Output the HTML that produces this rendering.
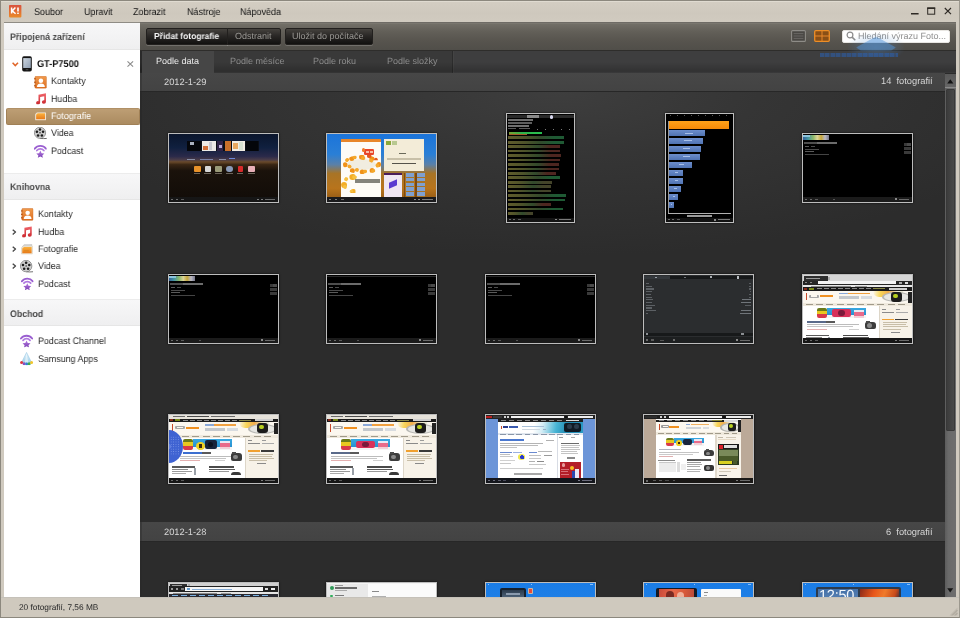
<!DOCTYPE html>
<html>
<head>
<meta charset="utf-8">
<title>Kies</title>
<style>
*{box-sizing:border-box;margin:0;padding:0}
html,body{width:960px;height:618px;overflow:hidden}
body{-webkit-font-smoothing:antialiased;text-rendering:geometricPrecision;font-family:"Liberation Sans",sans-serif;font-size:12px;background:#cfc9be;position:relative;color:#222}
.abs{position:absolute}
svg{position:absolute;overflow:visible}
#frame{left:0;top:0;width:960px;height:618px;background:#d0cabf;border:1px solid #8c887e;border-right-color:#9c988e}
#menubar{left:1px;top:1px;width:958px;height:21px;background:linear-gradient(#e6e2d8 0,#d3cdc2 1.5px,#cec8bd 60%,#d1cbc0 100%)}
.t{position:absolute;white-space:nowrap;line-height:1;transform-origin:0 50%;will-change:transform}
.menu{top:6.8px;font-size:9.8px;color:#141414;transform:scaleX(.918)}
#sidebar{left:4px;top:23px;width:136px;height:574px;background:#fff}
.shead{position:absolute;left:0;width:136px;background:linear-gradient(#f7f7f8,#efeff0);border-bottom:1px solid #e6e6e6}
.sh{font-weight:bold;color:#4a4a4a;font-size:9.5px;transform:scaleX(.926)}
.it{font-size:9.5px;color:#2a2a2a;transform:scaleX(.937)}
#sel{left:1.6px;top:85.2px;width:134px;height:16.4px;border-radius:2px;background:linear-gradient(#bd9e74,#ab8b60);border:1px solid #a08056;border-top-color:#b09066}
#main{left:140px;top:23px;width:816px;height:574px;background:#2a2a2a;overflow:hidden}
#toolbar{left:0;top:0;width:816px;height:27px;background:linear-gradient(#726f67,#625f58 30%,#57544e 65%,#504e49);border-top:1px solid #7a776f}
.btn{position:absolute;top:5px;height:17px;background:linear-gradient(#45423e,#2a2826 45%,#121110);border:1px solid #22201e;box-shadow:0 1px 0 rgba(255,255,255,.18)}
.bt{font-size:8.8px;color:#9a9894;top:9px}
#tabs{left:0;top:27px;width:816px;height:23px;background:linear-gradient(rgba(0,0,0,0) 50%,rgba(0,0,0,.2) 92%,rgba(0,0,0,.05)),linear-gradient(90deg,#2a2a2a 0 2px,#393939 2px 312px,#2c2c2c 312px 313px,#444 313px 314px,#3e3e3f 314px);border-top:1px solid #2e2d2b}
#tabact{left:2px;top:28px;width:72px;height:21.5px;background:#464646}
.tab{font-size:9px;color:#8c8c8c;top:34px}
.dhead{position:absolute;left:0;width:805px;height:19.5px;background:linear-gradient(90deg,#3a3a3a 0 2px,transparent 2px),linear-gradient(#474747,#434343);border-bottom:1px solid #272727}
.dt{font-size:9.3px;color:#d6d6d6}
.th{position:absolute;border:1px solid #bdbdbd;background:#000;box-shadow:0 0 2px rgba(0,0,0,.8);overflow:hidden}
.th i{position:absolute;display:block}
.L{width:111px;height:70px}
.P{width:69px;height:110px}
#status{left:1px;top:597px;width:958px;height:20px;background:#cfc9be;border-top:1px solid #c5c1b9}
#scroll{left:805px;top:50.5px;width:11px;height:523.5px;background:linear-gradient(90deg,#5c5c5c,#6a6a6a 30%,#6e6e6e)}
#sthumb{left:1px;top:15px;width:9px;height:342px;background:linear-gradient(90deg,#3c3c3c,#484848);border:1px solid #383838;border-radius:1px}
</style>
</head>
<body>

<svg width="0" height="0" style="position:absolute">
<defs>
<linearGradient id="gOr" x1="0" y1="0" x2="0" y2="1"><stop offset="0" stop-color="#f09a4c"/><stop offset="1" stop-color="#dd6f22"/></linearGradient>
<linearGradient id="gRed" x1="0" y1="0" x2="0" y2="1"><stop offset="0" stop-color="#f0646a"/><stop offset="1" stop-color="#c9262c"/></linearGradient>
<linearGradient id="gPh" x1="0" y1="0" x2="0" y2="1"><stop offset="0" stop-color="#fbb13c"/><stop offset="1" stop-color="#e8791a"/></linearGradient>
<linearGradient id="gPu" x1="0" y1="0" x2="0" y2="1"><stop offset="0" stop-color="#b57adf"/><stop offset="1" stop-color="#7a3fb4"/></linearGradient>
<linearGradient id="gLogo" x1="0" y1="0" x2="0" y2="1"><stop offset="0" stop-color="#d9523f"/><stop offset="1" stop-color="#ea8a28"/></linearGradient>
<linearGradient id="gScr" x1="0" y1="0" x2="1" y2="1"><stop offset="0" stop-color="#cdd6e0"/><stop offset="1" stop-color="#8f9fb3"/></linearGradient>
<linearGradient id="gCone" x1="0" y1="0" x2="0" y2="1"><stop offset="0" stop-color="#e6f4fb"/><stop offset="1" stop-color="#9fd0ea"/></linearGradient>
<symbol id="ic-con" viewBox="0 0 13 13">
 <rect x="0.9" y="0.2" width="11.9" height="12.6" rx="1.3" fill="url(#gOr)" stroke="#c9651f" stroke-width=".5"/>
 <rect x="0" y="2.2" width="1.8" height="1.3" fill="#b95a1c"/><rect x="0" y="5.8" width="1.8" height="1.3" fill="#b95a1c"/><rect x="0" y="9.4" width="1.8" height="1.3" fill="#b95a1c"/>
 <circle cx="7" cy="4.9" r="2.35" fill="#fff"/>
 <path d="M2.9 11.4C2.9 8.7 4.7 7.7 7 7.7S11.1 8.7 11.1 11.4Z" fill="#fff"/>
</symbol>
<symbol id="ic-mus" viewBox="0 0 12 12">
 <path d="M3.6 1.7L11.3.3V9.3a2.1 1.8 0 1 1-1.7-1.75V3.4L5.3 4.2V10.2a2.1 1.8 0 1 1-1.7-1.75Z" fill="url(#gRed)"/>
</symbol>
<symbol id="ic-pho" viewBox="0 0 12 9">
 <path d="M2.2 0.3H11.2a.6.6 0 0 1 .6.6V8.1a.6.6 0 0 1-.6.6H.8a.6.6 0 0 1-.6-.6V2.3Z" fill="#f7efe2" stroke="#d9c7a8" stroke-width=".4"/>
 <path d="M2.8 1.3H10.8V7.7H1.2V2.9Z" fill="url(#gPh)"/>
</symbol>
<symbol id="ic-pho2" viewBox="0 0 12 11">
 <path d="M3.4.4H11.4V8.4H1.6V2.4Z" fill="#d9d9d9" stroke="#bdbdbd" stroke-width=".4" transform="rotate(-4 6 5)"/>
 <path d="M2.4 2H11.4a.5.5 0 0 1 .5.5V10.1a.5.5 0 0 1-.5.5H.7a.5.5 0 0 1-.5-.5V4Z" fill="#efe6d6" stroke="#c9bca4" stroke-width=".4"/>
 <path d="M2.9 3.1H10.9V9.6H1.2V4.7Z" fill="url(#gPh)"/>
 <rect x="3" y="6.3" width="5" height="1.4" fill="#d9861f" opacity=".7"/>
</symbol>
<symbol id="ic-vid" viewBox="0 0 14 13">
 <path d="M6.5 12.2C9 12.6 11.5 12.4 13.6 12.2" stroke="#4a4a4a" stroke-width=".9" fill="none"/>
 <circle cx="6.4" cy="6.2" r="6" fill="#d8d8d8" stroke="#6a6a6a" stroke-width=".7"/>
 <circle cx="6.4" cy="6.2" r="4.9" fill="#bdbdbd" opacity=".55"/>
 <circle cx="6.4" cy="2.7" r="1.35" fill="#1c1c1c"/><circle cx="9.7" cy="5.1" r="1.35" fill="#1c1c1c"/><circle cx="8.45" cy="9" r="1.35" fill="#1c1c1c"/><circle cx="4.35" cy="9" r="1.35" fill="#1c1c1c"/><circle cx="3.1" cy="5.1" r="1.35" fill="#1c1c1c"/>
 <circle cx="6.4" cy="6.2" r=".8" fill="#333"/>
</symbol>
<symbol id="ic-pod" viewBox="0 0 13 14">
 <path d="M.7 4.6A7.4 7.4 0 0 1 12.3 4.6" stroke="#9a5fd0" stroke-width="1.9" fill="none" stroke-linecap="round"/>
 <path d="M2.9 6.5A4.8 4.8 0 0 1 10.1 6.5" stroke="#b07ae0" stroke-width="1.8" fill="none" stroke-linecap="round"/>
 <path d="M6.5 6.6L7.75 9.3L10.6 9.6L8.5 11.5L9.1 14L6.5 12.7L3.9 14L4.5 11.5L2.4 9.6L5.25 9.3Z" fill="url(#gPu)"/>
</symbol>
<symbol id="ic-app" viewBox="0 0 13 13">
 <path d="M6.5.3L11.6 10.6H1.4Z" fill="url(#gCone)" stroke="#8fc3e0" stroke-width=".5"/>
 <path d="M6.5 1.5L8.3 10H4.7Z" fill="#fff" opacity=".55"/>
 <circle cx="1.6" cy="10.3" r="1.5" fill="#e0383e"/><circle cx="4.1" cy="11.5" r="1.5" fill="#8b4fc0"/><circle cx="6.6" cy="11.9" r="1.5" fill="#2f7fd6"/><circle cx="9.1" cy="11.5" r="1.5" fill="#3fae4a"/><circle cx="11.5" cy="10.3" r="1.5" fill="#f1c62d"/>
</symbol>
<symbol id="ic-chev" viewBox="0 0 5 7"><path d="M.8.7L4 3.5L.8 6.3" stroke="#484848" stroke-width="1.5" fill="none"/></symbol>
</defs>
</svg>
<div id="frame" class="abs"></div>
<div id="menubar" class="abs">
  <svg style="left:7.8px;top:3.8px" width="12.4" height="12.4" viewBox="0 0 12.4 12.4"><rect width="12.4" height="12.4" rx=".8" fill="url(#gLogo)"/><path d="M2.6 2.6V8.6M6.4 2.6L3.2 5.9L6.6 8.8" stroke="#fff" stroke-width="1.5" fill="none"/><path d="M9 2.4V6.6" stroke="#fff" stroke-width="1.6"/><rect x="8.2" y="7.6" width="1.6" height="1.4" fill="#fff"/></svg>
  <svg style="left:909px;top:6px" width="44" height="10" viewBox="0 0 44 10"><rect x="1" y="6" width="7.6" height="1.5" fill="#2e2a25"/><rect x="17.7" y="1" width="7" height="6.2" fill="none" stroke="#2e2a25" stroke-width="1"/><rect x="17.2" y=".5" width="8" height="1.5" fill="#2e2a25"/><path d="M34.8 1L41 7.2M41 1L34.8 7.2" stroke="#2e2a25" stroke-width="1.15"/></svg>
  <span class="t menu" id="m1" style="left:33px">Soubor</span>
  <span class="t menu" id="m2" style="left:83px">Upravit</span>
  <span class="t menu" id="m3" style="left:132px">Zobrazit</span>
  <span class="t menu" id="m4" style="left:186px">Nástroje</span>
  <span class="t menu" id="m5" style="left:239px">Nápověda</span>
</div>
<div class="abs" style="left:4px;top:22px;width:952px;height:1px;background:linear-gradient(90deg,#8f8c85 0 136px,#6f6c66 136px)"></div>
<div id="sidebar" class="abs">
  <div class="shead" style="top:0;height:27px"></div>
  <span class="t sh" id="s1" style="left:6px;top:9.5px">Připojená zařízení</span>
  <span class="t it" id="d0" style="left:33px;top:37px;font-weight:bold;color:#111;font-size:9.8px">GT-P7500</span>
  <span class="t it" id="d1" style="left:47px;top:54px">Kontakty</span>
  <span class="t it" id="d2" style="left:47px;top:71.5px">Hudba</span>
  <div id="sel" class="abs"></div>
  <span class="t it" id="d3" style="left:47px;top:89px;color:#fff">Fotografie</span>
  <span class="t it" id="d4" style="left:47px;top:106px">Videa</span>
  <span class="t it" id="d5" style="left:47px;top:123.5px">Podcast</span>
  <div class="shead" style="top:150px;height:27px;border-top:1px solid #ececec"></div>
  <span class="t sh" id="s2" style="left:6px;top:160px">Knihovna</span>
  <span class="t it" id="k1" style="left:34px;top:187px">Kontakty</span>
  <span class="t it" id="k2" style="left:34px;top:204.5px">Hudba</span>
  <span class="t it" id="k3" style="left:34px;top:221.5px">Fotografie</span>
  <span class="t it" id="k4" style="left:34px;top:239px">Videa</span>
  <span class="t it" id="k5" style="left:34px;top:256.5px">Podcast</span>
  <div class="shead" style="top:276px;height:27px;border-top:1px solid #ececec"></div>
  <span class="t sh" id="s3" style="left:6px;top:287px">Obchod</span>
  <span class="t it" id="o1" style="left:34px;top:314px">Podcast Channel</span>
  <span class="t it" id="o2" style="left:34px;top:331.5px">Samsung Apps</span>

  <svg style="left:7.5px;top:39px" width="6.6" height="4.6" viewBox="0 0 6.6 4.6"><path d="M.6.7L3.3 3.6L6 .7" stroke="#e0662a" stroke-width="1.5" fill="none"/></svg>
  <svg style="left:18.3px;top:33.4px" width="10" height="15.6" viewBox="0 0 10 15.6"><rect x=".2" y=".2" width="9.6" height="15.2" rx="1.7" fill="#141414"/><rect x="1.2" y="2.1" width="7.6" height="9.9" fill="url(#gScr)"/><rect x="3.6" y="13" width="2.8" height="1.3" rx=".6" fill="#444"/></svg>
  <svg style="left:123px;top:37.8px" width="6.6" height="6" viewBox="0 0 6.6 6"><path d="M.5.4L6.1 5.6M6.1.4L.5 5.6" stroke="#8a8a8a" stroke-width="1.1"/></svg>
  <svg style="left:29.9px;top:52.8px" width="12.8" height="12.6"><use href="#ic-con" width="12.8" height="12.6"/></svg>
  <svg style="left:30.6px;top:69.8px" width="11.6" height="11.6"><use href="#ic-mus" width="11.6" height="11.6"/></svg>
  <svg style="left:31px;top:89.3px" width="11.2" height="8.6"><use href="#ic-pho" width="11.2" height="8.6"/></svg>
  <svg style="left:29.6px;top:104.3px" width="13.1" height="12.2"><use href="#ic-vid" width="13.1" height="12.2"/></svg>
  <svg style="left:30px;top:120.8px" width="12.7" height="14"><use href="#ic-pod" width="12.7" height="14"/></svg>

  <svg style="left:17px;top:185.3px" width="12.4" height="12.8"><use href="#ic-con" width="12.4" height="12.8"/></svg>
  <svg style="left:17.3px;top:202.7px" width="11.4" height="11.7"><use href="#ic-mus" width="11.4" height="11.7"/></svg>
  <svg style="left:17.3px;top:221px" width="11.8" height="10.6"><use href="#ic-pho2" width="11.8" height="10.6"/></svg>
  <svg style="left:16px;top:237.3px" width="13.4" height="12.7"><use href="#ic-vid" width="13.4" height="12.7"/></svg>
  <svg style="left:16.5px;top:254.1px" width="12.6" height="13.3"><use href="#ic-pod" width="12.6" height="13.3"/></svg>
  <svg style="left:7.8px;top:205.5px" width="4.4" height="6.2"><use href="#ic-chev" width="4.4" height="6.2"/></svg>
  <svg style="left:7.8px;top:222.5px" width="4.4" height="6.2"><use href="#ic-chev" width="4.4" height="6.2"/></svg>
  <svg style="left:7.8px;top:240px" width="4.4" height="6.2"><use href="#ic-chev" width="4.4" height="6.2"/></svg>

  <svg style="left:16.3px;top:311.4px" width="13.1" height="13.6"><use href="#ic-pod" width="13.1" height="13.6"/></svg>
  <svg style="left:16.3px;top:329.3px" width="13.1" height="13.3"><use href="#ic-app" width="13.1" height="13.3"/></svg>
</div>
<div id="main" class="abs">
  <div id="toolbar" class="abs"></div>
  <div class="btn" style="left:6px;width:82px;border-radius:2px 0 0 2px"></div>
  <div class="btn" style="left:87px;width:54px;border-radius:0 2px 2px 0"></div>
  <div class="btn" style="left:145px;width:88px;border-radius:2px"></div>
  <span class="t bt" id="b1" style="left:13.6px;color:#f4f4f4;font-weight:bold;font-size:8.7px;transform:scaleX(.972)">Přidat fotografie</span>
  <span class="t bt" id="b2" style="left:94.8px;font-size:9px">Odstranit</span>
  <span class="t bt" id="b3" style="left:152px;font-size:9px">Uložit do počítače</span>

  <svg style="left:650.5px;top:7px" width="15" height="12" viewBox="0 0 15 12"><rect x=".6" y=".6" width="13.8" height="10.8" rx="1" fill="#4a4844" stroke="#8e8c87" stroke-width="1.1"/><path d="M2.6 3.6H12.4M2.6 6H12.4M2.6 8.4H12.4" stroke="#6c6a66" stroke-width=".9"/></svg>
  <svg style="left:673.5px;top:7px" width="16" height="12" viewBox="0 0 16 12"><rect x=".7" y=".7" width="14.6" height="10.6" rx="1" fill="#8a4f16" stroke="#ee8e26" stroke-width="1.3"/><path d="M8 .7V11.3M.7 6H15.3" stroke="#e8882a" stroke-width="1"/></svg>
  <div class="abs" style="left:702px;top:6.6px;width:108px;height:13.8px;background:#fff;border-radius:2px;border:1px solid #e8e6e2"></div>
  <svg style="left:706px;top:8.3px" width="10" height="10" viewBox="0 0 10 10"><circle cx="4" cy="4" r="2.9" fill="none" stroke="#8c8c8c" stroke-width="1.2"/><path d="M6.1 6.1L9.3 9.3" stroke="#8c8c8c" stroke-width="1.5"/></svg>
  <span class="t" id="sr" style="left:718px;top:9px;font-size:9px;color:#8f8f8f">Hledání výrazu Foto...</span>
  <div id="tabs" class="abs"></div>
  <div id="tabact" class="abs"></div>
  <span class="t tab" id="t1" style="left:16px;color:#ececec">Podle data</span>
  <span class="t tab" id="t2" style="left:90px">Podle měsíce</span>
  <span class="t tab" id="t3" style="left:173px">Podle roku</span>
  <span class="t tab" id="t4" style="left:247px">Podle složky</span>
  <div id="content" class="abs" style="left:2px;top:68px;width:803px;height:507px;background:radial-gradient(ellipse 500px 165px at 52% 0,#3e3e3e 0,#353535 40%,#2c2c2c 100%) #2c2c2c"></div>
  <div class="dhead" style="top:49.5px;height:19px"></div>
  <span class="t dt" id="h1" style="left:24px;top:55.3px">2012-1-29</span>
  <span class="t dt" id="h2" style="left:741px;top:54.3px">14&nbsp; fotografií</span>
  <div class="dhead" style="top:499px"></div>
  <span class="t dt" id="h3" style="left:24px;top:504.6px">2012-1-28</span>
  <span class="t dt" id="h4" style="left:746px;top:504.6px">6&nbsp; fotografií</span>

  <!-- row 1 -->
  <div class="th L" id="a1" style="left:28px;top:110px"><i style="left:0px;top:0px;width:109px;height:68px;background:linear-gradient(#0a152c 0%,#10203f 20%,#2b2a4a 33%,#4a3c48 38%,#6a4a2a 41%,#3a2614 45%,#1a120b 54%,#110c08 100%)"></i><i style="left:18px;top:6.5px;width:72px;height:10.5px;background:#0a0e16"></i><i style="left:18px;top:6.5px;width:13.5px;height:10.5px;background:#05070b"></i><i style="left:21px;top:8px;width:4px;height:3px;background:#aab2c0"></i><i style="left:33px;top:7px;width:14px;height:10px;background:#eceae6"></i><i style="left:34px;top:12px;width:5px;height:4px;background:#d0703a"></i><i style="left:40px;top:8px;width:3px;height:8px;background:#c9c9d0"></i><i style="left:48px;top:7px;width:6px;height:10px;background:#2e2348"></i><i style="left:50px;top:11px;width:3px;height:3px;background:#b8a8d8"></i><i style="left:56px;top:7px;width:6px;height:10px;background:#c8702a"></i><i style="left:62.5px;top:7px;width:13.5px;height:10px;background:#f1ece2"></i><i style="left:64px;top:9px;width:5px;height:6px;background:#e8a860"></i><i style="left:70px;top:8px;width:4px;height:8px;background:#d6e0d0"></i><i style="left:76.5px;top:7px;width:12.5px;height:10px;background:#04060a"></i><i style="left:18px;top:24.5px;width:8px;height:0.9px;background:#8a8fa6"></i><i style="left:31px;top:24.5px;width:13px;height:0.9px;background:#7a82a8"></i><i style="left:50px;top:24.5px;width:7px;height:0.9px;background:#8a8fa6"></i><i style="left:60px;top:24.2px;width:6px;height:1.2px;background:#6a86d8"></i><i style="left:25px;top:32px;width:6.5px;height:6px;background:#e8922a;border-radius:1px"></i><i style="left:35.5px;top:32px;width:6.2px;height:6px;background:#d8d8d8;border-radius:1px"></i><i style="left:46.2px;top:32px;width:6.4px;height:6px;background:#9a9a78;border-radius:1px"></i><i style="left:57.3px;top:32px;width:6.4px;height:6px;background:#8a9ab8;border-radius:3px"></i><i style="left:68.5px;top:32px;width:5.5px;height:6px;background:#d82a2a;border-radius:1px"></i><i style="left:79.2px;top:32px;width:6.8px;height:6px;background:#e8b0b8;border-radius:1px"></i><i style="left:25px;top:39px;width:6px;height:1px;background:#6a6258"></i><i style="left:35px;top:39px;width:7px;height:0.8px;background:#6a6258"></i><i style="left:46px;top:39px;width:7px;height:0.8px;background:#6a6258"></i><i style="left:57px;top:39px;width:7px;height:0.8px;background:#6a6258"></i><i style="left:68px;top:39px;width:6px;height:0.8px;background:#6a6258"></i><i style="left:79px;top:39px;width:7px;height:0.8px;background:#6a6258"></i><i style="left:0px;top:63px;width:109px;height:5px;background:#161616"></i><i style="left:2px;top:64.8px;width:2px;height:1.4px;background:#6a6a6a"></i><i style="left:7px;top:64.8px;width:2px;height:1.4px;background:#6a6a6a"></i><i style="left:12px;top:64.8px;width:3px;height:1.4px;background:#5a5a5a"></i><i style="left:88px;top:64.8px;width:2px;height:1.4px;background:#7a7a7a"></i><i style="left:92px;top:64.8px;width:2px;height:1.4px;background:#7a7a7a"></i><i style="left:96px;top:65px;width:10px;height:1px;background:#6a6a6a"></i></div>
  <div class="th L" id="a2" style="left:186px;top:110px"><i style="left:0px;top:0px;width:109px;height:68px;background:linear-gradient(#1b74da 0%,#2a7fd6 30%,#5a80a8 45%,#a87426 58%,#b8741c 80%,#8a5414 100%)"></i><i style="left:13.6px;top:5.4px;width:40px;height:57.5px;background:#fdfbf6"></i><i style="left:13.6px;top:5.4px;width:40px;height:2.4px;background:#e8862a"></i><i style="left:20px;top:25px;width:29px;height:11px;background:#f1ede0;border-radius:50%"></i><i style="left:15.6px;top:20.6px;width:38px;height:19px;background:transparent;border:5.4px dotted #f0921a;border-radius:50%"></i><i style="left:16.6px;top:21.6px;width:36px;height:17px;background:transparent;border:4px dotted #f4a82c;border-radius:50%;transform:rotate(11deg)"></i><i style="left:34px;top:20.4px;width:17px;height:12px;background:transparent;border:4.6px dotted #e35a1e;border-radius:50%;clip-path:inset(0 0 52% 30%)"></i><i style="left:13.6px;top:39.6px;width:24px;height:21px;background:transparent;border:6px dotted #f3ad26;border-radius:50%;clip-path:inset(0 38% 8% 0)"></i><i style="left:14.6px;top:41px;width:22px;height:19px;background:transparent;border:4px dotted #f6c040;border-radius:50%;clip-path:inset(0 40% 10% 0);transform:rotate(14deg)"></i><i style="left:36.7px;top:15px;width:10.6px;height:6.4px;background:#e8452a;border-radius:1.2px"></i><i style="left:38.5px;top:16.6px;width:3px;height:2.6px;background:#f6c0a8"></i><i style="left:42.5px;top:16.6px;width:3px;height:2.6px;background:#f6c0a8"></i><i style="left:34.5px;top:14.2px;width:3.2px;height:3.6px;background:#f07a2a;border-radius:2px"></i><i style="left:28.3px;top:45px;width:25.2px;height:4px;background:#84847c"></i><i style="left:57.3px;top:5.4px;width:40px;height:32px;background:#f3ecd8"></i><i style="left:59px;top:7px;width:5px;height:4px;background:#8aa83a"></i><i style="left:65px;top:7px;width:5px;height:4px;background:#b8c890"></i><i style="left:72px;top:19px;width:7px;height:1.4px;background:#6a6a5a"></i><i style="left:60px;top:24px;width:34px;height:0.8px;background:#c8c0a8"></i><i style="left:60px;top:25.4px;width:34px;height:0.8px;background:#c8c0a8"></i><i style="left:65px;top:28.5px;width:24px;height:1.4px;background:#55524a"></i><i style="left:57.3px;top:38.8px;width:17.5px;height:24px;background:#efe6f2"></i><i style="left:57.3px;top:38.8px;width:17.5px;height:2.2px;background:#4a1c5a"></i><i style="left:62px;top:47px;width:8px;height:6px;background:#5a3ad0;transform:skewY(-25deg)"></i><i style="left:76.5px;top:39px;width:1.6px;height:24px;background:#7a4a14"></i><i style="left:79px;top:39px;width:8px;height:24px;background:repeating-linear-gradient(#7fa0d0 0 3.6px,#a87426 3.6px 4.8px)"></i><i style="left:88px;top:39px;width:1.6px;height:24px;background:#7a4a14"></i><i style="left:90px;top:39px;width:8px;height:24px;background:repeating-linear-gradient(#7fa0d0 0 3.6px,#a87426 3.6px 4.8px)"></i><i style="left:0px;top:63.2px;width:109px;height:5px;background:#1a1a1c"></i><i style="left:2px;top:65px;width:2px;height:1.4px;background:#7a7a7a"></i><i style="left:8px;top:65px;width:2px;height:1.4px;background:#7a7a7a"></i><i style="left:14px;top:65px;width:3px;height:1.4px;background:#6a6a6a"></i><i style="left:87px;top:65px;width:2px;height:1.4px;background:#8a8a8a"></i><i style="left:91px;top:65px;width:2px;height:1.4px;background:#8a8a8a"></i><i style="left:95px;top:65.2px;width:11px;height:1px;background:#7a7a7a"></i></div>
  <div class="th P" id="a3" style="left:366px;top:90px"><i style="left:0px;top:0px;width:67px;height:108px;background:#000"></i><i style="left:0px;top:1.2px;width:67px;height:2.6px;background:#2a2a2a"></i><i style="left:20px;top:1.2px;width:12px;height:2.6px;background:#8a8a8a"></i><i style="left:43px;top:1.4px;width:3.4px;height:3.4px;background:#d8d8f0;border-radius:2px"></i><i style="left:1px;top:5px;width:25px;height:2.2px;background:#6e6e6e"></i><i style="left:1px;top:8px;width:24px;height:2.2px;background:#5e5e5e"></i><i style="left:1px;top:11px;width:21px;height:2px;background:#707070"></i><i style="left:1px;top:14px;width:8px;height:1.2px;background:#5a5a5a"></i><i style="left:12px;top:14px;width:11px;height:1.2px;background:#5a5a5a"></i><i style="left:30px;top:14.5px;width:1.2px;height:1px;background:#7a7a7a"></i><i style="left:38px;top:14.5px;width:1.2px;height:1px;background:#7a7a7a"></i><i style="left:46px;top:14.5px;width:1.2px;height:1px;background:#7a7a7a"></i><i style="left:54px;top:14.5px;width:1.2px;height:1px;background:#7a7a7a"></i><i style="left:62px;top:14.5px;width:1.2px;height:1px;background:#7a7a7a"></i><i style="left:1.5px;top:17.6px;width:33px;height:2px;background:linear-gradient(90deg,#7aa030,#2fb44a 40%,#28c050)"></i><i style="left:1.5px;top:20px;width:18px;height:1px;background:#a05a2a"></i><i style="left:0.8px;top:22.4px;width:56.2px;height:2.7px;background:linear-gradient(90deg,#605c2c 0%,#4f532a 30%,#324a2c 58%,#1f5a34 82%,#1f5a34 100%)"></i><i style="left:0.8px;top:26.85px;width:56.2px;height:2.7px;background:linear-gradient(90deg,#605c2c 0%,#4f532a 30%,#324a2c 58%,#1f5a34 82%,#1f5a34 100%)"></i><i style="left:0.8px;top:31.3px;width:52.2px;height:2.7px;background:linear-gradient(90deg,#605c2c 0%,#4f532a 30%,#324a2c 58%,#4e2620 82%,#4e2620 100%)"></i><i style="left:0.8px;top:35.75px;width:52.2px;height:2.7px;background:linear-gradient(90deg,#605c2c 0%,#4f532a 30%,#324a2c 58%,#4e2620 82%,#4e2620 100%)"></i><i style="left:0.8px;top:40.2px;width:53.2px;height:2.7px;background:linear-gradient(90deg,#605c2c 0%,#4f532a 30%,#324a2c 58%,#4e2620 82%,#4e2620 100%)"></i><i style="left:0.8px;top:44.65px;width:52.2px;height:2.7px;background:linear-gradient(90deg,#605c2c 0%,#4f532a 30%,#324a2c 58%,#4e2620 82%,#4e2620 100%)"></i><i style="left:0.8px;top:49.1px;width:51.2px;height:2.7px;background:linear-gradient(90deg,#605c2c 0%,#4f532a 30%,#324a2c 58%,#4e2620 82%,#4e2620 100%)"></i><i style="left:0.8px;top:53.55px;width:51.2px;height:2.7px;background:linear-gradient(90deg,#605c2c 0%,#4f532a 30%,#324a2c 58%,#4e2620 82%,#4e2620 100%)"></i><i style="left:0.8px;top:58px;width:48.2px;height:2.7px;background:linear-gradient(90deg,#605c2c 0%,#4f532a 30%,#324a2c 58%,#4e2620 82%,#4e2620 100%)"></i><i style="left:0.8px;top:62.45px;width:52.2px;height:2.7px;background:linear-gradient(90deg,#605c2c 0%,#4f532a 30%,#324a2c 58%,#1f5a34 82%,#1f5a34 100%)"></i><i style="left:0.8px;top:66.9px;width:44.2px;height:2.7px;background:linear-gradient(90deg,#605c2c 0%,#4f532a 30%,#324a2c 58%,#44442a 82%,#44442a 100%)"></i><i style="left:0.8px;top:71.35px;width:43.2px;height:2.7px;background:linear-gradient(90deg,#605c2c 0%,#4f532a 30%,#324a2c 58%,#44442a 82%,#44442a 100%)"></i><i style="left:0.8px;top:75.8px;width:43.2px;height:2.7px;background:linear-gradient(90deg,#605c2c 0%,#4f532a 30%,#324a2c 58%,#44442a 82%,#44442a 100%)"></i><i style="left:0.8px;top:80.25px;width:58.2px;height:2.7px;background:linear-gradient(90deg,#605c2c 0%,#4f532a 30%,#324a2c 58%,#1f5a34 82%,#1f5a34 100%)"></i><i style="left:0.8px;top:84.7px;width:57.2px;height:2.7px;background:linear-gradient(90deg,#605c2c 0%,#4f532a 30%,#324a2c 58%,#1f5a34 82%,#1f5a34 100%)"></i><i style="left:0.8px;top:89.15px;width:43.2px;height:2.7px;background:linear-gradient(90deg,#605c2c 0%,#4f532a 30%,#324a2c 58%,#4e2620 82%,#4e2620 100%)"></i><i style="left:0.8px;top:93.6px;width:55.2px;height:2.7px;background:linear-gradient(90deg,#605c2c 0%,#4f532a 30%,#324a2c 58%,#1f5a34 82%,#1f5a34 100%)"></i><i style="left:0.8px;top:98.05px;width:25.2px;height:2.7px;background:linear-gradient(90deg,#605c2c 0%,#4f532a 30%,#324a2c 58%,#44442a 82%,#44442a 100%)"></i><i style="left:0px;top:103.6px;width:67px;height:4.4px;background:#141414"></i><i style="left:2px;top:105px;width:2px;height:1.2px;background:#6a6a6a"></i><i style="left:6px;top:105px;width:2px;height:1.2px;background:#6a6a6a"></i><i style="left:11px;top:105px;width:3px;height:1.2px;background:#5a5a5a"></i><i style="left:48px;top:105px;width:2px;height:1.4px;background:#8a8a8a"></i><i style="left:52px;top:105px;width:12px;height:1.2px;background:#7a7a7a"></i></div>
  <div class="th P" id="a4" style="left:525px;top:90px"><i style="left:0px;top:0px;width:67px;height:108px;background:#000"></i><i style="left:2.4px;top:7.3px;width:61px;height:7.6px;background:linear-gradient(#ffa21a,#f58a08)"></i><i style="left:1.6px;top:16px;width:37.9px;height:6.2px;background:linear-gradient(#6c8ecc,#5073b2)"></i><i style="left:19.095px;top:18.5px;width:8.162px;height:1px;background:#a8c0e8"></i><i style="left:1.6px;top:23.95px;width:35.9px;height:6.2px;background:linear-gradient(#6c8ecc,#5073b2)"></i><i style="left:18.195px;top:26.45px;width:7.722px;height:1px;background:#a8c0e8"></i><i style="left:1.6px;top:31.9px;width:33.6px;height:6.2px;background:linear-gradient(#6c8ecc,#5073b2)"></i><i style="left:17.16px;top:34.4px;width:7.216px;height:1px;background:#a8c0e8"></i><i style="left:1.6px;top:39.85px;width:32.6px;height:6.2px;background:linear-gradient(#6c8ecc,#5073b2)"></i><i style="left:16.71px;top:42.35px;width:6.996px;height:1px;background:#a8c0e8"></i><i style="left:1.6px;top:47.8px;width:24.4px;height:6.2px;background:linear-gradient(#6c8ecc,#5073b2)"></i><i style="left:13.02px;top:50.3px;width:5.192px;height:1px;background:#a8c0e8"></i><i style="left:1.6px;top:55.75px;width:15.6px;height:6.2px;background:linear-gradient(#6c8ecc,#5073b2)"></i><i style="left:9.06px;top:58.25px;width:3.256px;height:1px;background:#a8c0e8"></i><i style="left:1.6px;top:63.7px;width:15.2px;height:6.2px;background:linear-gradient(#6c8ecc,#5073b2)"></i><i style="left:8.88px;top:66.2px;width:3.168px;height:1px;background:#a8c0e8"></i><i style="left:1.6px;top:71.65px;width:13.4px;height:6.2px;background:linear-gradient(#6c8ecc,#5073b2)"></i><i style="left:8.07px;top:74.15px;width:2.772px;height:1px;background:#a8c0e8"></i><i style="left:1.6px;top:79.6px;width:10.8px;height:6.2px;background:linear-gradient(#6c8ecc,#5073b2)"></i><i style="left:6.9px;top:82.1px;width:2.2px;height:1px;background:#a8c0e8"></i><i style="left:1.6px;top:87.55px;width:6.4px;height:6.2px;background:linear-gradient(#6c8ecc,#5073b2)"></i><i style="left:4.92px;top:90.05px;width:1.232px;height:1px;background:#a8c0e8"></i><i style="left:2px;top:7px;width:0.8px;height:92px;background:#9a9a9a"></i><i style="left:2px;top:98.6px;width:63px;height:0.8px;background:#b0b0b0"></i><i style="left:21px;top:101px;width:25px;height:1.6px;background:#9a9a9a"></i><i style="left:4px;top:0.8px;width:1.2px;height:0.8px;background:#5a5a5a"></i><i style="left:11px;top:0.8px;width:1.2px;height:0.8px;background:#5a5a5a"></i><i style="left:18px;top:0.8px;width:1.2px;height:0.8px;background:#5a5a5a"></i><i style="left:25px;top:0.8px;width:1.2px;height:0.8px;background:#5a5a5a"></i><i style="left:32px;top:0.8px;width:1.2px;height:0.8px;background:#5a5a5a"></i><i style="left:39px;top:0.8px;width:1.2px;height:0.8px;background:#5a5a5a"></i><i style="left:46px;top:0.8px;width:1.2px;height:0.8px;background:#5a5a5a"></i><i style="left:53px;top:0.8px;width:1.2px;height:0.8px;background:#5a5a5a"></i><i style="left:60px;top:0.8px;width:1.2px;height:0.8px;background:#5a5a5a"></i><i style="left:0px;top:103.8px;width:67px;height:4.2px;background:#121212"></i><i style="left:2px;top:105.2px;width:2px;height:1.2px;background:#6a6a6a"></i><i style="left:6px;top:105.2px;width:2px;height:1.2px;background:#6a6a6a"></i><i style="left:11px;top:105.2px;width:3px;height:1.2px;background:#5a5a5a"></i><i style="left:48px;top:105.2px;width:2px;height:1.4px;background:#8a8a8a"></i><i style="left:52px;top:105.2px;width:12px;height:1.2px;background:#7a7a7a"></i></div>
  <div class="th L" id="a5" style="left:662px;top:110px"><i style="left:0px;top:0px;width:109px;height:68px;background:#000"></i><i style="left:0px;top:1.4px;width:26px;height:4.2px;background:linear-gradient(90deg,#34609c 0%,#4596a0 20%,#8fb86a 40%,#dcd498 55%,#c4a63c 70%,#b8b8c4 85%,#77778a 100%)"></i><i style="left:0px;top:1.4px;width:7px;height:1.8px;background:#8cc4dc"></i><i style="left:1px;top:7.6px;width:33px;height:2.8px;background:#6c6c6c"></i><i style="left:1px;top:7.6px;width:13px;height:2.8px;background:#4e4e4e"></i><i style="left:2px;top:12px;width:4px;height:1px;background:#5a5a5a"></i><i style="left:8px;top:12px;width:4px;height:1px;background:#4a4a4a"></i><i style="left:2px;top:14.6px;width:14px;height:1px;background:#4a4a4a"></i><i style="left:2px;top:17.2px;width:9px;height:1.2px;background:#5a5a5a"></i><i style="left:2px;top:19.8px;width:24px;height:1.2px;background:#444"></i><i style="left:101px;top:8.6px;width:7px;height:3.2px;background:#3a3a3a"></i><i style="left:101px;top:12.8px;width:7px;height:3.2px;background:#3a3a3a"></i><i style="left:101px;top:17px;width:7px;height:3.2px;background:#3a3a3a"></i><i style="left:104px;top:8.6px;width:4px;height:3.2px;background:#4a4a4a"></i><i style="left:0px;top:62.6px;width:109px;height:5.4px;background:#1b1b1b"></i><i style="left:2px;top:64.6px;width:2px;height:1.4px;background:#6a6a6a"></i><i style="left:7px;top:64.6px;width:2px;height:1.4px;background:#6a6a6a"></i><i style="left:12px;top:64.6px;width:3px;height:1.4px;background:#5a5a5a"></i><i style="left:30px;top:64.8px;width:2px;height:1px;background:#555"></i><i style="left:92px;top:64.4px;width:2px;height:1.6px;background:#8a8a8a"></i><i style="left:96px;top:64.8px;width:10px;height:1px;background:#6a6a6a"></i></div>
  <!-- row 2 -->
  <div class="th L" id="b1_" style="left:28px;top:251px"><i style="left:0px;top:0px;width:109px;height:68px;background:#000"></i><i style="left:0px;top:1.4px;width:26px;height:4.2px;background:linear-gradient(90deg,#34609c 0%,#4596a0 20%,#8fb86a 40%,#dcd498 55%,#c4a63c 70%,#b8b8c4 85%,#77778a 100%)"></i><i style="left:0px;top:1.4px;width:7px;height:1.8px;background:#8cc4dc"></i><i style="left:1px;top:7.6px;width:33px;height:2.8px;background:#6c6c6c"></i><i style="left:1px;top:7.6px;width:13px;height:2.8px;background:#4e4e4e"></i><i style="left:2px;top:12px;width:4px;height:1px;background:#5a5a5a"></i><i style="left:8px;top:12px;width:4px;height:1px;background:#4a4a4a"></i><i style="left:2px;top:14.6px;width:14px;height:1px;background:#4a4a4a"></i><i style="left:2px;top:17.2px;width:9px;height:1.2px;background:#5a5a5a"></i><i style="left:2px;top:19.8px;width:24px;height:1.2px;background:#444"></i><i style="left:101px;top:8.6px;width:7px;height:3.2px;background:#3a3a3a"></i><i style="left:101px;top:12.8px;width:7px;height:3.2px;background:#3a3a3a"></i><i style="left:101px;top:17px;width:7px;height:3.2px;background:#3a3a3a"></i><i style="left:104px;top:8.6px;width:4px;height:3.2px;background:#4a4a4a"></i><i style="left:0px;top:62.6px;width:109px;height:5.4px;background:#1b1b1b"></i><i style="left:2px;top:64.6px;width:2px;height:1.4px;background:#6a6a6a"></i><i style="left:7px;top:64.6px;width:2px;height:1.4px;background:#6a6a6a"></i><i style="left:12px;top:64.6px;width:3px;height:1.4px;background:#5a5a5a"></i><i style="left:30px;top:64.8px;width:2px;height:1px;background:#555"></i><i style="left:92px;top:64.4px;width:2px;height:1.6px;background:#8a8a8a"></i><i style="left:96px;top:64.8px;width:10px;height:1px;background:#6a6a6a"></i></div>
  <div class="th L" id="b2_" style="left:186px;top:251px"><i style="left:0px;top:0px;width:109px;height:68px;background:#000"></i><i style="left:0px;top:1.2px;width:109px;height:1px;background:#2a2a2a"></i><i style="left:1px;top:7.6px;width:33px;height:2.8px;background:#6c6c6c"></i><i style="left:1px;top:7.6px;width:13px;height:2.8px;background:#4e4e4e"></i><i style="left:2px;top:12px;width:4px;height:1px;background:#5a5a5a"></i><i style="left:8px;top:12px;width:4px;height:1px;background:#4a4a4a"></i><i style="left:2px;top:14.6px;width:14px;height:1px;background:#4a4a4a"></i><i style="left:2px;top:17.2px;width:9px;height:1.2px;background:#5a5a5a"></i><i style="left:2px;top:19.8px;width:24px;height:1.2px;background:#444"></i><i style="left:101px;top:8.6px;width:7px;height:3.2px;background:#3a3a3a"></i><i style="left:101px;top:12.8px;width:7px;height:3.2px;background:#3a3a3a"></i><i style="left:101px;top:17px;width:7px;height:3.2px;background:#3a3a3a"></i><i style="left:104px;top:8.6px;width:4px;height:3.2px;background:#4a4a4a"></i><i style="left:0px;top:62.6px;width:109px;height:5.4px;background:#1b1b1b"></i><i style="left:2px;top:64.6px;width:2px;height:1.4px;background:#6a6a6a"></i><i style="left:7px;top:64.6px;width:2px;height:1.4px;background:#6a6a6a"></i><i style="left:12px;top:64.6px;width:3px;height:1.4px;background:#5a5a5a"></i><i style="left:30px;top:64.8px;width:2px;height:1px;background:#555"></i><i style="left:92px;top:64.4px;width:2px;height:1.6px;background:#8a8a8a"></i><i style="left:96px;top:64.8px;width:10px;height:1px;background:#6a6a6a"></i></div>
  <div class="th L" id="b3_" style="left:345px;top:251px"><i style="left:0px;top:0px;width:109px;height:68px;background:#000"></i><i style="left:0px;top:1.2px;width:109px;height:1px;background:#2a2a2a"></i><i style="left:1px;top:7.6px;width:33px;height:2.8px;background:#6c6c6c"></i><i style="left:1px;top:7.6px;width:13px;height:2.8px;background:#4e4e4e"></i><i style="left:2px;top:12px;width:4px;height:1px;background:#5a5a5a"></i><i style="left:8px;top:12px;width:4px;height:1px;background:#4a4a4a"></i><i style="left:2px;top:14.6px;width:14px;height:1px;background:#4a4a4a"></i><i style="left:2px;top:17.2px;width:9px;height:1.2px;background:#5a5a5a"></i><i style="left:2px;top:19.8px;width:24px;height:1.2px;background:#444"></i><i style="left:101px;top:8.6px;width:7px;height:3.2px;background:#3a3a3a"></i><i style="left:101px;top:12.8px;width:7px;height:3.2px;background:#3a3a3a"></i><i style="left:101px;top:17px;width:7px;height:3.2px;background:#3a3a3a"></i><i style="left:104px;top:8.6px;width:4px;height:3.2px;background:#4a4a4a"></i><i style="left:0px;top:62.6px;width:109px;height:5.4px;background:#1b1b1b"></i><i style="left:2px;top:64.6px;width:2px;height:1.4px;background:#6a6a6a"></i><i style="left:7px;top:64.6px;width:2px;height:1.4px;background:#6a6a6a"></i><i style="left:12px;top:64.6px;width:3px;height:1.4px;background:#5a5a5a"></i><i style="left:30px;top:64.8px;width:2px;height:1px;background:#555"></i><i style="left:92px;top:64.4px;width:2px;height:1.6px;background:#8a8a8a"></i><i style="left:96px;top:64.8px;width:10px;height:1px;background:#6a6a6a"></i></div>
  <div class="th L" id="b4_" style="left:503px;top:251px"><i style="left:0px;top:0px;width:109px;height:68px;background:#2b2d2f"></i><i style="left:0px;top:0.6px;width:109px;height:3.6px;background:#161819"></i><i style="left:0px;top:0.6px;width:26px;height:3.6px;background:#34383c"></i><i style="left:11px;top:1.6px;width:2px;height:1.6px;background:#9aa0a8"></i><i style="left:40px;top:1.6px;width:1.6px;height:1.6px;background:#6a6e72"></i><i style="left:66px;top:1.4px;width:2px;height:2px;background:#a8acb0"></i><i style="left:93px;top:1.4px;width:2.2px;height:2.2px;background:#b8bcc0"></i><i style="left:2px;top:8px;width:3px;height:1.1px;background:#5c6064"></i><i style="left:2px;top:10.72px;width:6px;height:1.1px;background:#5c6064"></i><i style="left:2px;top:13.44px;width:8px;height:1.1px;background:#5c6064"></i><i style="left:2px;top:16.16px;width:6px;height:1.1px;background:#5c6064"></i><i style="left:2px;top:18.88px;width:5px;height:1.1px;background:#5c6064"></i><i style="left:2px;top:21.6px;width:6px;height:1.1px;background:#5c6064"></i><i style="left:2px;top:24.32px;width:7px;height:1.1px;background:#5c6064"></i><i style="left:2px;top:27.04px;width:6px;height:1.1px;background:#5c6064"></i><i style="left:2px;top:29.76px;width:9px;height:1.1px;background:#5c6064"></i><i style="left:2px;top:32.48px;width:6px;height:1.1px;background:#5c6064"></i><i style="left:2px;top:35.2px;width:10px;height:1.1px;background:#5c6064"></i><i style="left:2px;top:37.92px;width:2px;height:1.1px;background:#5c6064"></i><i style="left:105px;top:8px;width:2px;height:1.1px;background:#585c60"></i><i style="left:105px;top:10.72px;width:2px;height:1.1px;background:#585c60"></i><i style="left:105px;top:13.44px;width:2px;height:1.1px;background:#585c60"></i><i style="left:105.5px;top:16.16px;width:1.5px;height:1.1px;background:#585c60"></i><i style="left:105px;top:18.88px;width:2px;height:1.1px;background:#585c60"></i><i style="left:105px;top:21.6px;width:2px;height:1.1px;background:#585c60"></i><i style="left:98px;top:24.32px;width:9px;height:1.1px;background:#70757a"></i><i style="left:97px;top:27.04px;width:10px;height:1.1px;background:#70757a"></i><i style="left:101px;top:29.76px;width:6px;height:1.1px;background:#585c60"></i><i style="left:97px;top:35.2px;width:10px;height:1.1px;background:#70757a"></i><i style="left:96px;top:37.92px;width:11px;height:1.1px;background:#70757a"></i><i style="left:0px;top:57.6px;width:109px;height:3px;background:#17191a"></i><i style="left:1.5px;top:58.2px;width:2px;height:1.6px;background:#8a8e92"></i><i style="left:97px;top:58.4px;width:3px;height:1.4px;background:#8a8e92"></i><i style="left:0px;top:61.6px;width:109px;height:6.4px;background:#1d1f20"></i><i style="left:2px;top:64.4px;width:2px;height:1.4px;background:#6a6a6a"></i><i style="left:7px;top:64.4px;width:3px;height:1.4px;background:#5a5a5a"></i><i style="left:16px;top:64.6px;width:4px;height:1px;background:#555"></i><i style="left:29px;top:64.4px;width:2px;height:1.4px;background:#6a6a6a"></i><i style="left:92px;top:64.2px;width:2px;height:1.6px;background:#8a8a8a"></i><i style="left:96px;top:64.6px;width:10px;height:1px;background:#6a6a6a"></i></div>
  <div class="th L" id="b5_" style="left:662px;top:251px"><i style="left:0px;top:0px;width:109px;height:68px;background:#fff"></i><i style="left:0px;top:0px;width:109px;height:5.6px;background:#d6d6d6"></i><i style="left:1px;top:1.2px;width:24px;height:4.4px;background:#2e2e2e"></i><i style="left:3px;top:2.6px;width:14px;height:1px;background:#9a9a9a"></i><i style="left:25px;top:2px;width:2px;height:2.6px;background:#b0b0b0"></i><i style="left:0px;top:5.6px;width:109px;height:4.2px;background:#262626"></i><i style="left:15px;top:6.3px;width:78px;height:2.6px;background:#f4f4f4"></i><i style="left:2px;top:6.8px;width:2px;height:1.6px;background:#8a8a8a"></i><i style="left:7px;top:6.8px;width:2px;height:1.6px;background:#8a8a8a"></i><i style="left:96px;top:6.6px;width:3px;height:2px;background:#aaa"></i><i style="left:102px;top:6.6px;width:3px;height:2px;background:#ddd"></i><i style="left:0px;top:9.8px;width:109px;height:2.4px;background:#e9e9e9"></i><i style="left:8px;top:10.6px;width:40px;height:0.8px;background:#8a8a8a"></i><i style="left:52px;top:10.6px;width:12px;height:0.8px;background:#9a9a9a"></i><i style="left:0px;top:12.2px;width:109px;height:3.6px;background:#1b1b1b"></i><i style="left:1px;top:13px;width:3px;height:1.8px;background:#8a2a1a"></i><i style="left:5.5px;top:13px;width:5px;height:1.8px;background:#7a8a1a"></i><i style="left:14px;top:13.4px;width:4.5px;height:1px;background:#8a8a8a"></i><i style="left:21px;top:13.4px;width:4.5px;height:1px;background:#8a8a8a"></i><i style="left:28px;top:13.4px;width:4.5px;height:1px;background:#8a8a8a"></i><i style="left:35px;top:13.4px;width:4.5px;height:1px;background:#8a8a8a"></i><i style="left:42px;top:13.4px;width:4.5px;height:1px;background:#8a8a8a"></i><i style="left:49px;top:13.4px;width:4.5px;height:1px;background:#8a8a8a"></i><i style="left:56px;top:13.4px;width:4.5px;height:1px;background:#8a8a8a"></i><i style="left:63px;top:13.4px;width:4.5px;height:1px;background:#8a8a8a"></i><i style="left:70px;top:13.4px;width:12px;height:1px;background:#8a8a4a"></i><i style="left:86px;top:12.8px;width:18px;height:2.2px;background:#cfcfcf"></i><i style="left:0px;top:15.8px;width:109px;height:12.6px;background:#fbf7ef"></i><i style="left:70px;top:15.8px;width:30px;height:6px;background:linear-gradient(100deg,transparent 0,#f6d040 25%,#f0a030 50%,#e8e8d0 80%);border-radius:0 0 14px 30px;opacity:.85"></i><i style="left:79px;top:17.2px;width:29px;height:10px;background:#b8b8b4;border-radius:50%"></i><i style="left:81px;top:18.2px;width:25px;height:8px;background:#e6e6e2;border-radius:50%"></i><i style="left:88px;top:17px;width:11px;height:10px;background:#1c1c1c;border-radius:3px"></i><i style="left:90px;top:18.8px;width:5px;height:4px;background:#b8d020;border-radius:2px"></i><i style="left:104.5px;top:16.8px;width:4.5px;height:11px;background:#222"></i><i style="left:2.5px;top:17.8px;width:0.9px;height:7.5px;background:#c84a2a"></i><i style="left:6px;top:19.6px;width:10px;height:3px;background:#a8a8a8;border-radius:1px"></i><i style="left:8px;top:20.4px;width:6px;height:1.4px;background:#fbf7ef"></i><i style="left:17px;top:20.2px;width:13px;height:2px;background:#f09020"></i><i style="left:36px;top:17.8px;width:9px;height:1.6px;background:#8aa8d8"></i><i style="left:45px;top:17.8px;width:22px;height:1.6px;background:#f0a040"></i><i style="left:36px;top:21.4px;width:20px;height:3px;background:#c4c8cc"></i><i style="left:58px;top:21.4px;width:11px;height:3px;background:#d8dce0"></i><i style="left:0px;top:28.4px;width:109px;height:2.8px;background:#efe9dd"></i><i style="left:3px;top:29.4px;width:7px;height:0.8px;background:#a09a8a"></i><i style="left:13.2px;top:29.4px;width:7px;height:0.8px;background:#a09a8a"></i><i style="left:23.4px;top:29.4px;width:7px;height:0.8px;background:#a09a8a"></i><i style="left:33.6px;top:29.4px;width:7px;height:0.8px;background:#a09a8a"></i><i style="left:43.8px;top:29.4px;width:7px;height:0.8px;background:#a09a8a"></i><i style="left:54px;top:29.4px;width:7px;height:0.8px;background:#a09a8a"></i><i style="left:64.2px;top:29.4px;width:7px;height:0.8px;background:#a09a8a"></i><i style="left:74.4px;top:29.4px;width:7px;height:0.8px;background:#a09a8a"></i><i style="left:84.6px;top:29.4px;width:7px;height:0.8px;background:#a09a8a"></i><i style="left:94.8px;top:29.4px;width:7px;height:0.8px;background:#a09a8a"></i><i style="left:75.5px;top:31.2px;width:1.4px;height:31.8px;background:#ddd6c8"></i><i style="left:76.9px;top:31.2px;width:32.1px;height:31.8px;background:#f7f2e8"></i><i style="left:14px;top:32.8px;width:10px;height:10.6px;background:linear-gradient(#6a7a1a 0 25%,#e8c820 25% 60%,#d83a4a 60% 100%);border-radius:2px"></i><i style="left:24px;top:32.8px;width:39px;height:7.4px;background:linear-gradient(#38a8e0,#2890d0)"></i><i style="left:24px;top:40.2px;width:39px;height:3.2px;background:#f4f4f4"></i><i style="left:29px;top:34.4px;width:19px;height:7.6px;background:#d8305a;border-radius:2px"></i><i style="left:35px;top:35.4px;width:7px;height:5.6px;background:#7a1a3a;border-radius:3px"></i><i style="left:51px;top:34.8px;width:10px;height:8px;background:linear-gradient(#e8e8f4 0 30%,#e86a8a 30% 70%,#f0d0d8 70%)"></i><i style="left:4px;top:45.8px;width:19px;height:2px;background:#5a6a8a"></i><i style="left:23px;top:45.8px;width:9px;height:2px;background:#5a5a5a"></i><i style="left:4px;top:49.2px;width:52px;height:1px;background:#bcbcbc"></i><i style="left:4px;top:51.4px;width:46px;height:1px;background:#c6c6c6"></i><i style="left:4px;top:53.8px;width:20px;height:0.8px;background:#e4b0b0"></i><i style="left:46px;top:53.8px;width:10px;height:0.8px;background:#d0d0d0"></i><i style="left:61.5px;top:46.8px;width:11px;height:7.4px;background:#3c3c3c;border-radius:2px 3px 2px 2px"></i><i style="left:64px;top:48.4px;width:5px;height:4.4px;background:#8a8a8a;border-radius:3px"></i><i style="left:63px;top:45.6px;width:4px;height:2px;background:#4a4a4a"></i><i style="left:3px;top:59.8px;width:23px;height:1.4px;background:#5a5a5a"></i><i style="left:3px;top:62.4px;width:16px;height:0.9px;background:#8a8a8a"></i><i style="left:3px;top:64.6px;width:20px;height:0.9px;background:#9a9a9a"></i><i style="left:3px;top:66.4px;width:14px;height:0.9px;background:#aaa"></i><i style="left:25px;top:61.8px;width:2.4px;height:7px;background:#9aa0a8"></i><i style="left:40px;top:59.8px;width:25px;height:1.4px;background:#4a4a4a"></i><i style="left:40px;top:62.2px;width:26px;height:1.2px;background:#5a5a5a"></i><i style="left:40px;top:64.6px;width:20px;height:0.9px;background:#9a9a9a"></i><i style="left:62px;top:65.8px;width:10px;height:3px;background:#3a3a3a;border-radius:3px 3px 0 0"></i><i style="left:79px;top:33.6px;width:4px;height:0.9px;background:#8a8a8a"></i><i style="left:93px;top:33.6px;width:4px;height:0.9px;background:#9a9a9a"></i><i style="left:79px;top:36.8px;width:12px;height:1.2px;background:#8a8a8a"></i><i style="left:93px;top:36.8px;width:12px;height:1.2px;background:#aaa"></i><i style="left:79px;top:43.8px;width:12px;height:1.4px;background:#f0a030"></i><i style="left:91.5px;top:43.8px;width:13px;height:1.4px;background:#3a3a3a"></i><i style="left:80px;top:47.2px;width:24px;height:0.9px;background:#c8bea8"></i><i style="left:80px;top:49.3px;width:23px;height:0.9px;background:#c8bea8"></i><i style="left:80px;top:51.4px;width:25px;height:0.9px;background:#c8bea8"></i><i style="left:80px;top:53.5px;width:18px;height:0.9px;background:#c8bea8"></i><i style="left:88px;top:56.8px;width:9px;height:1px;background:#8a8a8a"></i><i style="left:0px;top:63px;width:109px;height:5px;background:#161616"></i><i style="left:2px;top:64.8px;width:2px;height:1.4px;background:#6a6a6a"></i><i style="left:7px;top:64.8px;width:2px;height:1.4px;background:#6a6a6a"></i><i style="left:12px;top:64.8px;width:3px;height:1.4px;background:#5a5a5a"></i><i style="left:92px;top:64.6px;width:2px;height:1.6px;background:#7a7a7a"></i><i style="left:96px;top:65px;width:10px;height:1px;background:#6a6a6a"></i></div>
  <!-- row 3 -->
  <div class="th L" id="c1" style="left:28px;top:391px"><i style="left:0px;top:0px;width:109px;height:68px;background:#fff"></i><i style="left:0px;top:0px;width:109px;height:3.6px;background:#e6e2da"></i><i style="left:4px;top:1.2px;width:12px;height:1.2px;background:#6a6a6a"></i><i style="left:18px;top:1.2px;width:22px;height:1.2px;background:#4a4a4a"></i><i style="left:42px;top:1.2px;width:24px;height:1.2px;background:#6a6a6a"></i><i style="left:0px;top:3.6px;width:109px;height:3.6px;background:#1b1b1b"></i><i style="left:1px;top:4.4px;width:3px;height:1.8px;background:#8a2a1a"></i><i style="left:5.5px;top:4.4px;width:5px;height:1.8px;background:#7a8a1a"></i><i style="left:14px;top:4.8px;width:4.5px;height:1px;background:#8a8a8a"></i><i style="left:21px;top:4.8px;width:4.5px;height:1px;background:#8a8a8a"></i><i style="left:28px;top:4.8px;width:4.5px;height:1px;background:#8a8a8a"></i><i style="left:35px;top:4.8px;width:4.5px;height:1px;background:#8a8a8a"></i><i style="left:42px;top:4.8px;width:4.5px;height:1px;background:#8a8a8a"></i><i style="left:49px;top:4.8px;width:4.5px;height:1px;background:#8a8a8a"></i><i style="left:56px;top:4.8px;width:4.5px;height:1px;background:#8a8a8a"></i><i style="left:63px;top:4.8px;width:4.5px;height:1px;background:#8a8a8a"></i><i style="left:70px;top:4.8px;width:12px;height:1px;background:#8a8a4a"></i><i style="left:86px;top:4.2px;width:18px;height:2.2px;background:#cfcfcf"></i><i style="left:0px;top:7.2px;width:109px;height:12.6px;background:#fbf7ef"></i><i style="left:70px;top:7.2px;width:30px;height:6px;background:linear-gradient(100deg,transparent 0,#f6d040 25%,#f0a030 50%,#e8e8d0 80%);border-radius:0 0 14px 30px;opacity:.85"></i><i style="left:79px;top:8.6px;width:29px;height:10px;background:#b8b8b4;border-radius:50%"></i><i style="left:81px;top:9.6px;width:25px;height:8px;background:#e6e6e2;border-radius:50%"></i><i style="left:88px;top:8.4px;width:11px;height:10px;background:#1c1c1c;border-radius:3px"></i><i style="left:90px;top:10.2px;width:5px;height:4px;background:#b8d020;border-radius:2px"></i><i style="left:104.5px;top:8.2px;width:4.5px;height:11px;background:#222"></i><i style="left:2.5px;top:9.2px;width:0.9px;height:7.5px;background:#c84a2a"></i><i style="left:6px;top:11px;width:10px;height:3px;background:#a8a8a8;border-radius:1px"></i><i style="left:8px;top:11.8px;width:6px;height:1.4px;background:#fbf7ef"></i><i style="left:17px;top:11.6px;width:13px;height:2px;background:#f09020"></i><i style="left:36px;top:9.2px;width:9px;height:1.6px;background:#8aa8d8"></i><i style="left:45px;top:9.2px;width:22px;height:1.6px;background:#f0a040"></i><i style="left:36px;top:12.8px;width:20px;height:3px;background:#c4c8cc"></i><i style="left:58px;top:12.8px;width:11px;height:3px;background:#d8dce0"></i><i style="left:0px;top:19.8px;width:109px;height:2.8px;background:#efe9dd"></i><i style="left:3px;top:20.8px;width:7px;height:0.8px;background:#a09a8a"></i><i style="left:13.2px;top:20.8px;width:7px;height:0.8px;background:#a09a8a"></i><i style="left:23.4px;top:20.8px;width:7px;height:0.8px;background:#a09a8a"></i><i style="left:33.6px;top:20.8px;width:7px;height:0.8px;background:#a09a8a"></i><i style="left:43.8px;top:20.8px;width:7px;height:0.8px;background:#a09a8a"></i><i style="left:54px;top:20.8px;width:7px;height:0.8px;background:#a09a8a"></i><i style="left:64.2px;top:20.8px;width:7px;height:0.8px;background:#a09a8a"></i><i style="left:74.4px;top:20.8px;width:7px;height:0.8px;background:#a09a8a"></i><i style="left:84.6px;top:20.8px;width:7px;height:0.8px;background:#a09a8a"></i><i style="left:94.8px;top:20.8px;width:7px;height:0.8px;background:#a09a8a"></i><i style="left:75.5px;top:22.6px;width:1.4px;height:40.4px;background:#ddd6c8"></i><i style="left:76.9px;top:22.6px;width:32.1px;height:40.4px;background:#f7f2e8"></i><i style="left:-15px;top:15.2px;width:29px;height:33px;background:radial-gradient(circle,#5a7ae0 0 12%,#3f63d2 13% 100%);border-radius:50%"></i><i style="left:1px;top:21.2px;width:10px;height:20px;background:radial-gradient(#9ab0f0 .5px,transparent .8px) 0 0/2.4px 2.4px;opacity:.7"></i><i style="left:14px;top:24.2px;width:10px;height:10.6px;background:linear-gradient(#6a7a1a 0 25%,#e8c820 25% 60%,#d83a4a 60% 100%);border-radius:2px"></i><i style="left:24px;top:24.2px;width:39px;height:7.4px;background:linear-gradient(#38a8e0,#2890d0)"></i><i style="left:24px;top:31.6px;width:39px;height:3.2px;background:#f4f4f4"></i><i style="left:27px;top:26.8px;width:8.6px;height:8px;background:radial-gradient(circle,#3a2a10 0 30%,#f0d020 32% 100%);border-radius:50%"></i><i style="left:36px;top:25.4px;width:11.6px;height:8.4px;background:#18243c;border-radius:2px"></i><i style="left:39px;top:27.2px;width:5px;height:5px;background:#0c1220;border-radius:3px"></i><i style="left:51px;top:26.2px;width:10px;height:8px;background:linear-gradient(#e8e8f4 0 30%,#e86a8a 30% 70%,#f0d0d8 70%)"></i><i style="left:14px;top:37.2px;width:19px;height:2px;background:#3c6fd0"></i><i style="left:33px;top:37.2px;width:9px;height:2px;background:#5a5a5a"></i><i style="left:11px;top:40.6px;width:52px;height:1px;background:#bcbcbc"></i><i style="left:11px;top:42.8px;width:46px;height:1px;background:#c6c6c6"></i><i style="left:11px;top:45.2px;width:20px;height:0.8px;background:#e4b0b0"></i><i style="left:46px;top:45.2px;width:10px;height:0.8px;background:#d0d0d0"></i><i style="left:61.5px;top:38.2px;width:11px;height:7.4px;background:#3c3c3c;border-radius:2px 3px 2px 2px"></i><i style="left:64px;top:39.8px;width:5px;height:4.4px;background:#8a8a8a;border-radius:3px"></i><i style="left:63px;top:37px;width:4px;height:2px;background:#4a4a4a"></i><i style="left:3px;top:51.2px;width:23px;height:1.4px;background:#5a5a5a"></i><i style="left:3px;top:53.8px;width:16px;height:0.9px;background:#8a8a8a"></i><i style="left:3px;top:56px;width:20px;height:0.9px;background:#9a9a9a"></i><i style="left:3px;top:57.8px;width:14px;height:0.9px;background:#aaa"></i><i style="left:25px;top:53.2px;width:2.4px;height:7px;background:#9aa0a8"></i><i style="left:40px;top:51.2px;width:25px;height:1.4px;background:#4a4a4a"></i><i style="left:40px;top:53.6px;width:26px;height:1.2px;background:#5a5a5a"></i><i style="left:40px;top:56px;width:20px;height:0.9px;background:#9a9a9a"></i><i style="left:62px;top:57.2px;width:10px;height:3px;background:#3a3a3a;border-radius:3px 3px 0 0"></i><i style="left:79px;top:25px;width:4px;height:0.9px;background:#8a8a8a"></i><i style="left:93px;top:25px;width:4px;height:0.9px;background:#9a9a9a"></i><i style="left:79px;top:28.2px;width:12px;height:1.2px;background:#8a8a8a"></i><i style="left:93px;top:28.2px;width:12px;height:1.2px;background:#aaa"></i><i style="left:79px;top:35.2px;width:12px;height:1.4px;background:#f0a030"></i><i style="left:91.5px;top:35.2px;width:13px;height:1.4px;background:#3a3a3a"></i><i style="left:80px;top:38.6px;width:24px;height:0.9px;background:#c8bea8"></i><i style="left:80px;top:40.7px;width:23px;height:0.9px;background:#c8bea8"></i><i style="left:80px;top:42.8px;width:25px;height:0.9px;background:#c8bea8"></i><i style="left:80px;top:44.9px;width:18px;height:0.9px;background:#c8bea8"></i><i style="left:88px;top:48.2px;width:9px;height:1px;background:#8a8a8a"></i><i style="left:0px;top:63px;width:109px;height:5px;background:#161616"></i><i style="left:2px;top:64.8px;width:2px;height:1.4px;background:#6a6a6a"></i><i style="left:7px;top:64.8px;width:2px;height:1.4px;background:#6a6a6a"></i><i style="left:12px;top:64.8px;width:3px;height:1.4px;background:#5a5a5a"></i><i style="left:92px;top:64.6px;width:2px;height:1.6px;background:#7a7a7a"></i><i style="left:96px;top:65px;width:10px;height:1px;background:#6a6a6a"></i></div>
  <div class="th L" id="c2" style="left:186px;top:391px"><i style="left:0px;top:0px;width:109px;height:68px;background:#fff"></i><i style="left:0px;top:0px;width:109px;height:3.6px;background:#e6e2da"></i><i style="left:4px;top:1.2px;width:12px;height:1.2px;background:#6a6a6a"></i><i style="left:18px;top:1.2px;width:22px;height:1.2px;background:#4a4a4a"></i><i style="left:42px;top:1.2px;width:24px;height:1.2px;background:#6a6a6a"></i><i style="left:0px;top:3.6px;width:109px;height:3.6px;background:#1b1b1b"></i><i style="left:1px;top:4.4px;width:3px;height:1.8px;background:#8a2a1a"></i><i style="left:5.5px;top:4.4px;width:5px;height:1.8px;background:#7a8a1a"></i><i style="left:14px;top:4.8px;width:4.5px;height:1px;background:#8a8a8a"></i><i style="left:21px;top:4.8px;width:4.5px;height:1px;background:#8a8a8a"></i><i style="left:28px;top:4.8px;width:4.5px;height:1px;background:#8a8a8a"></i><i style="left:35px;top:4.8px;width:4.5px;height:1px;background:#8a8a8a"></i><i style="left:42px;top:4.8px;width:4.5px;height:1px;background:#8a8a8a"></i><i style="left:49px;top:4.8px;width:4.5px;height:1px;background:#8a8a8a"></i><i style="left:56px;top:4.8px;width:4.5px;height:1px;background:#8a8a8a"></i><i style="left:63px;top:4.8px;width:4.5px;height:1px;background:#8a8a8a"></i><i style="left:70px;top:4.8px;width:12px;height:1px;background:#8a8a4a"></i><i style="left:86px;top:4.2px;width:18px;height:2.2px;background:#cfcfcf"></i><i style="left:0px;top:7.2px;width:109px;height:12.6px;background:#fbf7ef"></i><i style="left:70px;top:7.2px;width:30px;height:6px;background:linear-gradient(100deg,transparent 0,#f6d040 25%,#f0a030 50%,#e8e8d0 80%);border-radius:0 0 14px 30px;opacity:.85"></i><i style="left:79px;top:8.6px;width:29px;height:10px;background:#b8b8b4;border-radius:50%"></i><i style="left:81px;top:9.6px;width:25px;height:8px;background:#e6e6e2;border-radius:50%"></i><i style="left:88px;top:8.4px;width:11px;height:10px;background:#1c1c1c;border-radius:3px"></i><i style="left:90px;top:10.2px;width:5px;height:4px;background:#b8d020;border-radius:2px"></i><i style="left:104.5px;top:8.2px;width:4.5px;height:11px;background:#222"></i><i style="left:2.5px;top:9.2px;width:0.9px;height:7.5px;background:#c84a2a"></i><i style="left:6px;top:11px;width:10px;height:3px;background:#a8a8a8;border-radius:1px"></i><i style="left:8px;top:11.8px;width:6px;height:1.4px;background:#fbf7ef"></i><i style="left:17px;top:11.6px;width:13px;height:2px;background:#f09020"></i><i style="left:36px;top:9.2px;width:9px;height:1.6px;background:#8aa8d8"></i><i style="left:45px;top:9.2px;width:22px;height:1.6px;background:#f0a040"></i><i style="left:36px;top:12.8px;width:20px;height:3px;background:#c4c8cc"></i><i style="left:58px;top:12.8px;width:11px;height:3px;background:#d8dce0"></i><i style="left:0px;top:19.8px;width:109px;height:2.8px;background:#efe9dd"></i><i style="left:3px;top:20.8px;width:7px;height:0.8px;background:#a09a8a"></i><i style="left:13.2px;top:20.8px;width:7px;height:0.8px;background:#a09a8a"></i><i style="left:23.4px;top:20.8px;width:7px;height:0.8px;background:#a09a8a"></i><i style="left:33.6px;top:20.8px;width:7px;height:0.8px;background:#a09a8a"></i><i style="left:43.8px;top:20.8px;width:7px;height:0.8px;background:#a09a8a"></i><i style="left:54px;top:20.8px;width:7px;height:0.8px;background:#a09a8a"></i><i style="left:64.2px;top:20.8px;width:7px;height:0.8px;background:#a09a8a"></i><i style="left:74.4px;top:20.8px;width:7px;height:0.8px;background:#a09a8a"></i><i style="left:84.6px;top:20.8px;width:7px;height:0.8px;background:#a09a8a"></i><i style="left:94.8px;top:20.8px;width:7px;height:0.8px;background:#a09a8a"></i><i style="left:75.5px;top:22.6px;width:1.4px;height:40.4px;background:#ddd6c8"></i><i style="left:76.9px;top:22.6px;width:32.1px;height:40.4px;background:#f7f2e8"></i><i style="left:14px;top:24.2px;width:10px;height:10.6px;background:linear-gradient(#6a7a1a 0 25%,#e8c820 25% 60%,#d83a4a 60% 100%);border-radius:2px"></i><i style="left:24px;top:24.2px;width:39px;height:7.4px;background:linear-gradient(#38a8e0,#2890d0)"></i><i style="left:24px;top:31.6px;width:39px;height:3.2px;background:#f4f4f4"></i><i style="left:29px;top:25.8px;width:19px;height:7.6px;background:#d8305a;border-radius:2px"></i><i style="left:35px;top:26.8px;width:7px;height:5.6px;background:#7a1a3a;border-radius:3px"></i><i style="left:51px;top:26.2px;width:10px;height:8px;background:linear-gradient(#e8e8f4 0 30%,#e86a8a 30% 70%,#f0d0d8 70%)"></i><i style="left:4px;top:37.2px;width:19px;height:2px;background:#5a6a8a"></i><i style="left:23px;top:37.2px;width:9px;height:2px;background:#5a5a5a"></i><i style="left:4px;top:40.6px;width:52px;height:1px;background:#bcbcbc"></i><i style="left:4px;top:42.8px;width:46px;height:1px;background:#c6c6c6"></i><i style="left:4px;top:45.2px;width:20px;height:0.8px;background:#e4b0b0"></i><i style="left:46px;top:45.2px;width:10px;height:0.8px;background:#d0d0d0"></i><i style="left:61.5px;top:38.2px;width:11px;height:7.4px;background:#3c3c3c;border-radius:2px 3px 2px 2px"></i><i style="left:64px;top:39.8px;width:5px;height:4.4px;background:#8a8a8a;border-radius:3px"></i><i style="left:63px;top:37px;width:4px;height:2px;background:#4a4a4a"></i><i style="left:3px;top:51.2px;width:23px;height:1.4px;background:#5a5a5a"></i><i style="left:3px;top:53.8px;width:16px;height:0.9px;background:#8a8a8a"></i><i style="left:3px;top:56px;width:20px;height:0.9px;background:#9a9a9a"></i><i style="left:3px;top:57.8px;width:14px;height:0.9px;background:#aaa"></i><i style="left:25px;top:53.2px;width:2.4px;height:7px;background:#9aa0a8"></i><i style="left:40px;top:51.2px;width:25px;height:1.4px;background:#4a4a4a"></i><i style="left:40px;top:53.6px;width:26px;height:1.2px;background:#5a5a5a"></i><i style="left:40px;top:56px;width:20px;height:0.9px;background:#9a9a9a"></i><i style="left:62px;top:57.2px;width:10px;height:3px;background:#3a3a3a;border-radius:3px 3px 0 0"></i><i style="left:79px;top:25px;width:4px;height:0.9px;background:#8a8a8a"></i><i style="left:93px;top:25px;width:4px;height:0.9px;background:#9a9a9a"></i><i style="left:79px;top:28.2px;width:12px;height:1.2px;background:#8a8a8a"></i><i style="left:93px;top:28.2px;width:12px;height:1.2px;background:#aaa"></i><i style="left:79px;top:35.2px;width:12px;height:1.4px;background:#f0a030"></i><i style="left:91.5px;top:35.2px;width:13px;height:1.4px;background:#3a3a3a"></i><i style="left:80px;top:38.6px;width:24px;height:0.9px;background:#c8bea8"></i><i style="left:80px;top:40.7px;width:23px;height:0.9px;background:#c8bea8"></i><i style="left:80px;top:42.8px;width:25px;height:0.9px;background:#c8bea8"></i><i style="left:80px;top:44.9px;width:18px;height:0.9px;background:#c8bea8"></i><i style="left:88px;top:48.2px;width:9px;height:1px;background:#8a8a8a"></i><i style="left:0px;top:63px;width:109px;height:5px;background:#161616"></i><i style="left:2px;top:64.8px;width:2px;height:1.4px;background:#6a6a6a"></i><i style="left:7px;top:64.8px;width:2px;height:1.4px;background:#6a6a6a"></i><i style="left:12px;top:64.8px;width:3px;height:1.4px;background:#5a5a5a"></i><i style="left:92px;top:64.6px;width:2px;height:1.6px;background:#7a7a7a"></i><i style="left:96px;top:65px;width:10px;height:1px;background:#6a6a6a"></i></div>
  <div class="th L" id="c3" style="left:345px;top:391px"><i style="left:0px;top:0px;width:109px;height:68px;background:#6c95d8"></i><i style="left:0px;top:0px;width:109px;height:3.8px;background:#232323"></i><i style="left:0px;top:0.6px;width:6px;height:2.6px;background:#b81e1e"></i><i style="left:7px;top:0.8px;width:9px;height:2.4px;background:#3a3a3a"></i><i style="left:17.5px;top:0.8px;width:2px;height:2.4px;background:#d0d0d0"></i><i style="left:21px;top:0.8px;width:2px;height:2.4px;background:#d0d0d0"></i><i style="left:24.5px;top:1px;width:53px;height:2px;background:#f2f2f2"></i><i style="left:78.6px;top:0.6px;width:2px;height:2.8px;background:#111"></i><i style="left:82px;top:1px;width:25px;height:2px;background:#ededed"></i><i style="left:12px;top:4px;width:85px;height:59px;background:#fff"></i><i style="left:12px;top:4.4px;width:85px;height:2.2px;background:#1e1e1e"></i><i style="left:15px;top:5.1px;width:5px;height:0.8px;background:#8a8a8a"></i><i style="left:23px;top:5.1px;width:5px;height:0.8px;background:#8a8a8a"></i><i style="left:31px;top:5.1px;width:5px;height:0.8px;background:#8a8a8a"></i><i style="left:39px;top:5.1px;width:5px;height:0.8px;background:#8a8a8a"></i><i style="left:47px;top:5.1px;width:5px;height:0.8px;background:#8a8a8a"></i><i style="left:55px;top:5.1px;width:5px;height:0.8px;background:#8a8a8a"></i><i style="left:63px;top:5.1px;width:5px;height:0.8px;background:#8a8a8a"></i><i style="left:71px;top:5.1px;width:5px;height:0.8px;background:#8a8a8a"></i><i style="left:80px;top:4.6px;width:13px;height:1.8px;background:#d8d8d8"></i><i style="left:12px;top:6.6px;width:85px;height:11px;background:linear-gradient(100deg,#fff 0 42%,#d6eef6 52%,#48b4d4 68%,#1f86b0 82%,#2a9ac4 100%)"></i><i style="left:78px;top:7.6px;width:17px;height:9.4px;background:#101a24;border-radius:2px"></i><i style="left:81px;top:9px;width:5px;height:5px;background:#2c3c4c;border-radius:3px"></i><i style="left:88px;top:9px;width:5px;height:5px;background:#2c3c4c;border-radius:3px"></i><i style="left:14.6px;top:10.6px;width:1px;height:3px;background:#c84a2a"></i><i style="left:17px;top:10.8px;width:5px;height:2px;background:#2a3a8a"></i><i style="left:23px;top:10.8px;width:9px;height:2px;background:#3a5ab0"></i><i style="left:36px;top:10.6px;width:22px;height:1px;background:#a8c0d8"></i><i style="left:36px;top:13.6px;width:18px;height:1.6px;background:#d0d8e0"></i><i style="left:57px;top:13.6px;width:3px;height:1.6px;background:#9ab0c8"></i><i style="left:12px;top:17.6px;width:85px;height:2.6px;background:#dfe6ee"></i><i style="left:14px;top:18.5px;width:5.6px;height:0.8px;background:#8a96a8"></i><i style="left:22.2px;top:18.5px;width:5.6px;height:0.8px;background:#8a96a8"></i><i style="left:30.4px;top:18.5px;width:5.6px;height:0.8px;background:#8a96a8"></i><i style="left:38.6px;top:18.5px;width:5.6px;height:0.8px;background:#8a96a8"></i><i style="left:46.8px;top:18.5px;width:5.6px;height:0.8px;background:#8a96a8"></i><i style="left:55px;top:18.5px;width:5.6px;height:0.8px;background:#8a96a8"></i><i style="left:63.2px;top:18.5px;width:5.6px;height:0.8px;background:#8a96a8"></i><i style="left:71.4px;top:18.5px;width:5.6px;height:0.8px;background:#8a96a8"></i><i style="left:79.6px;top:18.5px;width:5.6px;height:0.8px;background:#8a96a8"></i><i style="left:87.8px;top:18.5px;width:5.6px;height:0.8px;background:#8a96a8"></i><i style="left:70.6px;top:20.2px;width:1.2px;height:43px;background:#d8dce4"></i><i style="left:14px;top:24.4px;width:24px;height:1.6px;background:#4a78d0"></i><i style="left:60px;top:24.6px;width:8px;height:0.9px;background:#b0b0b0"></i><i style="left:14px;top:27.6px;width:43px;height:1px;background:#b4b4b4"></i><i style="left:14px;top:29.8px;width:38px;height:1px;background:#bcbcbc"></i><i style="left:14px;top:32px;width:17px;height:1px;background:#c4c4c4"></i><i style="left:14px;top:36.6px;width:12px;height:1.2px;background:#6a8ad0"></i><i style="left:27px;top:36.6px;width:9px;height:1.2px;background:#9ab0e0"></i><i style="left:14px;top:39px;width:10px;height:0.9px;background:#c0c0c0"></i><i style="left:14px;top:41.2px;width:13px;height:0.9px;background:#c8c8c8"></i><i style="left:14px;top:44.6px;width:15px;height:1.6px;background:#d0d0d0"></i><i style="left:14px;top:47.6px;width:11px;height:0.9px;background:#c8c8c8"></i><i style="left:32px;top:39.4px;width:6.6px;height:5.6px;background:radial-gradient(circle at 60% 55%,#2a3ad0 0 38%,#f0e850 40% 100%);border-radius:50%"></i><i style="left:43px;top:36.6px;width:8px;height:1.4px;background:#6a8ad0"></i><i style="left:52px;top:36.4px;width:14px;height:1px;background:#b8b8b8"></i><i style="left:43px;top:40px;width:12px;height:0.9px;background:#c0c0c0"></i><i style="left:58px;top:40px;width:8px;height:1px;background:#9a9a9a"></i><i style="left:43px;top:42.6px;width:12px;height:0.9px;background:#c8c8c8"></i><i style="left:43px;top:45.6px;width:6px;height:1.6px;background:#b0b0b0"></i><i style="left:51px;top:45.6px;width:7px;height:1.6px;background:#8a8a8a"></i><i style="left:43px;top:49px;width:17px;height:0.9px;background:#c8c8c8"></i><i style="left:14px;top:53.4px;width:43px;height:0.9px;background:#d0d0d0"></i><i style="left:28px;top:58.4px;width:28px;height:1.2px;background:#a8a8a8"></i><i style="left:73px;top:21.6px;width:4px;height:0.9px;background:#9a9a9a"></i><i style="left:85px;top:21.6px;width:4px;height:0.9px;background:#aaa"></i><i style="left:74.6px;top:27.6px;width:18px;height:1.2px;background:#6a6a6a"></i><i style="left:74.6px;top:30.4px;width:19px;height:0.9px;background:#c4c4c4"></i><i style="left:74.6px;top:32.3px;width:18px;height:0.9px;background:#c4c4c4"></i><i style="left:74.6px;top:34.2px;width:19px;height:0.9px;background:#c4c4c4"></i><i style="left:74.6px;top:36.1px;width:16px;height:0.9px;background:#c4c4c4"></i><i style="left:74.6px;top:38px;width:17px;height:0.9px;background:#c4c4c4"></i><i style="left:81px;top:42.4px;width:8px;height:1.2px;background:#8a8a8a"></i><i style="left:73.6px;top:46.8px;width:21.4px;height:16.2px;background:#b41e28"></i><i style="left:76px;top:48.4px;width:3.4px;height:3.4px;background:#e8a0a0;border-radius:2px"></i><i style="left:83.6px;top:50.6px;width:4.6px;height:4.6px;background:#f6c020;border-radius:3px"></i><i style="left:75px;top:54px;width:8px;height:0.9px;background:#d87078"></i><i style="left:75px;top:56.4px;width:7px;height:0.9px;background:#d87078"></i><i style="left:75px;top:58.8px;width:8px;height:0.9px;background:#d87078"></i><i style="left:88.6px;top:54px;width:4.6px;height:9px;background:#e8e8f4"></i><i style="left:85.6px;top:56px;width:3px;height:7px;background:#2a4ab0"></i><i style="left:0px;top:63px;width:109px;height:5px;background:#14161c"></i><i style="left:2px;top:64.8px;width:2px;height:1.4px;background:#6a6a7a"></i><i style="left:7px;top:64.8px;width:2px;height:1.4px;background:#6a6a7a"></i><i style="left:12px;top:64.8px;width:3px;height:1.4px;background:#5a5a6a"></i><i style="left:17px;top:64.8px;width:3px;height:1.2px;background:#4a4a5a"></i><i style="left:29px;top:64.8px;width:2px;height:1.2px;background:#555"></i><i style="left:92px;top:64.6px;width:2px;height:1.6px;background:#7a7a8a"></i><i style="left:96px;top:65px;width:10px;height:1px;background:#6a6a7a"></i></div>
  <div class="th L" id="c4" style="left:503px;top:391px"><i style="left:0px;top:0px;width:109px;height:68px;background:#bba998"></i><i style="left:0px;top:0px;width:109px;height:3.8px;background:#1f1f1f"></i><i style="left:1px;top:0.8px;width:12px;height:2.4px;background:#2e2e2e"></i><i style="left:16px;top:0.8px;width:2px;height:2.4px;background:#d0d0d0"></i><i style="left:20px;top:0.8px;width:2px;height:2.4px;background:#d0d0d0"></i><i style="left:24.5px;top:1px;width:53px;height:2px;background:#f2f2f2"></i><i style="left:79px;top:0.6px;width:2px;height:2.8px;background:#111"></i><i style="left:82.4px;top:1px;width:25px;height:2px;background:#ededed"></i><i style="left:12.4px;top:4px;width:84.6px;height:59px;background:#fff"></i><i style="left:12.4px;top:4.6px;width:84.6px;height:2.2px;background:#1e1e1e"></i><i style="left:15px;top:5.3px;width:5px;height:0.8px;background:#8a8a8a"></i><i style="left:23px;top:5.3px;width:5px;height:0.8px;background:#8a8a8a"></i><i style="left:31px;top:5.3px;width:5px;height:0.8px;background:#8a8a8a"></i><i style="left:39px;top:5.3px;width:5px;height:0.8px;background:#8a8a8a"></i><i style="left:47px;top:5.3px;width:5px;height:0.8px;background:#8a8a8a"></i><i style="left:55px;top:5.3px;width:5px;height:0.8px;background:#8a8a8a"></i><i style="left:63px;top:5.3px;width:5px;height:0.8px;background:#8a8a8a"></i><i style="left:68px;top:5.3px;width:10px;height:0.8px;background:#8a8a3a"></i><i style="left:80px;top:4.8px;width:14px;height:1.8px;background:#d8d8d8"></i><i style="left:12.4px;top:6.8px;width:84.6px;height:10.6px;background:#fcf8f0"></i><i style="left:68px;top:6.8px;width:22px;height:5px;background:linear-gradient(100deg,transparent 0,#f6d040 25%,#f0a030 50%,#e8e8d0 80%);border-radius:0 0 10px 24px;opacity:.85"></i><i style="left:76px;top:8px;width:20px;height:8.6px;background:#b4b4b0;border-radius:50%"></i><i style="left:78px;top:9px;width:16px;height:6.6px;background:#e8e8e4;border-radius:50%"></i><i style="left:83.6px;top:7.6px;width:8.4px;height:8.6px;background:#1c1c1c;border-radius:2px"></i><i style="left:85px;top:9px;width:4px;height:3.6px;background:#b8d020;border-radius:2px"></i><i style="left:93.6px;top:7px;width:3.4px;height:10px;background:#222"></i><i style="left:14.6px;top:9px;width:0.8px;height:6px;background:#c84a2a"></i><i style="left:17px;top:10.4px;width:8px;height:2.6px;background:#9a9a9a;border-radius:1px"></i><i style="left:18.6px;top:11.2px;width:5px;height:1.2px;background:#fcf8f0"></i><i style="left:25px;top:10.8px;width:10px;height:2px;background:#f09020"></i><i style="left:42px;top:9px;width:4px;height:1.2px;background:#8aa8d8"></i><i style="left:47px;top:9px;width:18px;height:1.2px;background:#f0b060"></i><i style="left:42px;top:12px;width:15px;height:2.4px;background:#d0d4d8"></i><i style="left:59px;top:12px;width:6px;height:2.4px;background:#dadde0"></i><i style="left:12.4px;top:17.4px;width:84.6px;height:2.4px;background:#efe9dd"></i><i style="left:14px;top:18.3px;width:5.6px;height:0.8px;background:#a09a8a"></i><i style="left:22.2px;top:18.3px;width:5.6px;height:0.8px;background:#a09a8a"></i><i style="left:30.4px;top:18.3px;width:5.6px;height:0.8px;background:#a09a8a"></i><i style="left:38.6px;top:18.3px;width:5.6px;height:0.8px;background:#a09a8a"></i><i style="left:46.8px;top:18.3px;width:5.6px;height:0.8px;background:#a09a8a"></i><i style="left:55px;top:18.3px;width:5.6px;height:0.8px;background:#a09a8a"></i><i style="left:63.2px;top:18.3px;width:5.6px;height:0.8px;background:#a09a8a"></i><i style="left:71.4px;top:18.3px;width:5.6px;height:0.8px;background:#a09a8a"></i><i style="left:79.6px;top:18.3px;width:5.6px;height:0.8px;background:#a09a8a"></i><i style="left:87.8px;top:18.3px;width:5.6px;height:0.8px;background:#a09a8a"></i><i style="left:71.4px;top:19.8px;width:1.2px;height:43.2px;background:#e0d9cc"></i><i style="left:72.6px;top:19.8px;width:24.4px;height:43.2px;background:#f8f3ea"></i><i style="left:22px;top:22.6px;width:7.6px;height:8.4px;background:linear-gradient(#6a7a1a 0 25%,#e8c820 25% 60%,#d83a4a 60% 100%);border-radius:2px"></i><i style="left:29.6px;top:22.6px;width:30.4px;height:5.8px;background:linear-gradient(#38a8e0,#2890d0)"></i><i style="left:29.6px;top:28.4px;width:30.4px;height:2.4px;background:#f4f4f4"></i><i style="left:32px;top:24.6px;width:6.4px;height:6px;background:radial-gradient(circle,#3a2a10 0 30%,#f0d020 32% 100%);border-radius:50%"></i><i style="left:39px;top:23.6px;width:9px;height:6.6px;background:#18243c;border-radius:2px"></i><i style="left:50px;top:24px;width:8px;height:6.4px;background:linear-gradient(#e8e8f4 0 30%,#e86a8a 30% 70%,#f0d0d8 70%)"></i><i style="left:15px;top:33.6px;width:22px;height:1.6px;background:#b0b4c0"></i><i style="left:15px;top:36.6px;width:40px;height:0.9px;background:#c4c4c4"></i><i style="left:15px;top:38.6px;width:34px;height:0.9px;background:#cacaca"></i><i style="left:15px;top:40.6px;width:14px;height:0.8px;background:#e0b0b0"></i><i style="left:60px;top:35.4px;width:9.6px;height:6px;background:#3a3a3a;border-radius:2px 3px 2px 2px"></i><i style="left:62px;top:36.6px;width:4.4px;height:3.8px;background:#8a8a8a;border-radius:3px"></i><i style="left:61.6px;top:34.2px;width:3.6px;height:2px;background:#4a4a4a"></i><i style="left:14.4px;top:44.6px;width:17px;height:1.2px;background:#8a8a8a"></i><i style="left:15px;top:47px;width:17px;height:10px;background:#ececec"></i><i style="left:15px;top:47px;width:17px;height:1.2px;background:#c8c8c8"></i><i style="left:32.6px;top:47px;width:3.4px;height:10px;background:#dcdcdc"></i><i style="left:37px;top:49px;width:5px;height:6px;background:#f0f0f0"></i><i style="left:43px;top:44.4px;width:24px;height:1.4px;background:#5a5a5a"></i><i style="left:43px;top:47px;width:14px;height:0.9px;background:#9a9a9a"></i><i style="left:43px;top:49.2px;width:15px;height:0.9px;background:#aaa"></i><i style="left:43px;top:51.4px;width:13px;height:0.9px;background:#aaa"></i><i style="left:43px;top:53.6px;width:14px;height:0.9px;background:#b4b4b4"></i><i style="left:43px;top:55.8px;width:13px;height:0.9px;background:#b4b4b4"></i><i style="left:60px;top:49.6px;width:9.6px;height:6.4px;background:#333;border-radius:2px"></i><i style="left:62px;top:51px;width:4.4px;height:3.8px;background:#8a8a8a;border-radius:3px"></i><i style="left:74px;top:21.6px;width:5px;height:0.9px;background:#c0b8a8"></i><i style="left:82px;top:21.6px;width:10px;height:0.9px;background:#d0c8b8"></i><i style="left:74px;top:24px;width:18px;height:1.2px;background:#e8dcc8"></i><i style="left:73.6px;top:29px;width:21px;height:21.4px;background:#2c3a22"></i><i style="left:73.6px;top:29px;width:21px;height:5.4px;background:#1a1a1a"></i><i style="left:74.6px;top:29.8px;width:4.4px;height:3.8px;background:#d8202a"></i><i style="left:80px;top:30.4px;width:13px;height:2.4px;background:#e0e0e0"></i><i style="left:74.6px;top:35.4px;width:19px;height:6px;background:#7a8a5a"></i><i style="left:74.6px;top:41.4px;width:19px;height:4.6px;background:#4a5a2a"></i><i style="left:75px;top:46px;width:13px;height:3px;background:#d8d020"></i><i style="left:89px;top:46px;width:4px;height:3px;background:#4a5a2a"></i><i style="left:74.6px;top:52.8px;width:18px;height:1px;background:#e8c8a0"></i><i style="left:74.6px;top:55.6px;width:12px;height:0.9px;background:#d0c8b8"></i><i style="left:74.6px;top:60px;width:8px;height:1.4px;background:#6a6a6a"></i><i style="left:0px;top:63px;width:109px;height:5px;background:#1a1816"></i><i style="left:2px;top:64.8px;width:1.6px;height:1.8px;background:#6a6a6a"></i><i style="left:9px;top:64.8px;width:3px;height:1.4px;background:#5a5a5a"></i><i style="left:15px;top:64.8px;width:3px;height:1.4px;background:#5a5a5a"></i><i style="left:21px;top:64.8px;width:4px;height:1.2px;background:#4a4a4a"></i><i style="left:29px;top:64.8px;width:2px;height:1.2px;background:#555"></i><i style="left:92px;top:64.6px;width:2px;height:1.6px;background:#7a7a7a"></i><i style="left:96px;top:65px;width:10px;height:1px;background:#6a6a6a"></i></div>
  <!-- row 4 -->
  <div class="th L" id="e1" style="left:28px;top:559px"><i style="left:0px;top:0px;width:109px;height:68px;background:#e8e8e8"></i><i style="left:0px;top:0px;width:109px;height:3.4px;background:#d0d0d0"></i><i style="left:1px;top:1px;width:17px;height:2.4px;background:#2e2e2e"></i><i style="left:3px;top:1.8px;width:10px;height:0.8px;background:#9a9a9a"></i><i style="left:19px;top:1.2px;width:2px;height:2px;background:#aaa"></i><i style="left:0px;top:3.4px;width:109px;height:5.6px;background:#222"></i><i style="left:2px;top:5px;width:2px;height:1.8px;background:#9a9a9a"></i><i style="left:7px;top:5px;width:2px;height:1.8px;background:#9a9a9a"></i><i style="left:12px;top:4.6px;width:2.6px;height:2.6px;background:#7a7a7a"></i><i style="left:16px;top:4.4px;width:78px;height:3.2px;background:#f6f6f6"></i><i style="left:18px;top:5.4px;width:3px;height:1.4px;background:#6aa0d0"></i><i style="left:23px;top:5.6px;width:40px;height:1px;background:#8ab0d8"></i><i style="left:96px;top:4.6px;width:3px;height:2.6px;background:#ddd"></i><i style="left:102px;top:4.6px;width:4px;height:2.6px;background:#eee"></i><i style="left:0px;top:9px;width:109px;height:2.4px;background:#e4e4e4"></i><i style="left:4px;top:9.8px;width:44px;height:0.8px;background:#8a8a8a"></i><i style="left:52px;top:9.8px;width:10px;height:0.8px;background:#9a9a9a"></i><i style="left:0px;top:11.4px;width:109px;height:3.4px;background:#2a2a32"></i><i style="left:3px;top:12.4px;width:6px;height:1px;background:#7ab0e0"></i><i style="left:12px;top:12.4px;width:6px;height:1px;background:#7ab0e0"></i><i style="left:21px;top:12.4px;width:6px;height:1px;background:#7ab0e0"></i><i style="left:30px;top:12.4px;width:6px;height:1px;background:#7ab0e0"></i><i style="left:39px;top:12.4px;width:6px;height:1px;background:#7ab0e0"></i><i style="left:48px;top:12.4px;width:6px;height:1px;background:#7ab0e0"></i><i style="left:57px;top:12.4px;width:6px;height:1px;background:#7ab0e0"></i><i style="left:66px;top:12.4px;width:6px;height:1px;background:#7ab0e0"></i><i style="left:75px;top:12.4px;width:6px;height:1px;background:#7ab0e0"></i><i style="left:84px;top:12.4px;width:6px;height:1px;background:#7ab0e0"></i><i style="left:93px;top:12.4px;width:6px;height:1px;background:#7ab0e0"></i><i style="left:0px;top:14.8px;width:109px;height:40px;background:#4a90d8"></i></div>
  <div class="th L" id="e2" style="left:186px;top:559px"><i style="left:0px;top:0px;width:109px;height:68px;background:#fbfbfb"></i><i style="left:0px;top:0px;width:41px;height:68px;background:#e9e9e9"></i><i style="left:0px;top:0px;width:109px;height:0.8px;background:#f4f4f4"></i><i style="left:3px;top:2.6px;width:3.6px;height:4.4px;background:#2f9a58;border-radius:2px"></i><i style="left:8px;top:2.4px;width:8px;height:0.9px;background:#9a9a9a"></i><i style="left:8px;top:4.4px;width:22px;height:1.4px;background:#6a6a6a"></i><i style="left:8px;top:7px;width:12px;height:0.8px;background:#aaa"></i><i style="left:3px;top:11.6px;width:3.4px;height:2.8px;background:#2fae5a;border-radius:1px"></i><i style="left:8px;top:12.2px;width:9px;height:1.2px;background:#7a7a7a"></i><i style="left:45px;top:7.6px;width:7px;height:1px;background:#8a8a8a"></i><i style="left:45px;top:12.6px;width:14px;height:0.9px;background:#b0b0b0"></i></div>
  <div class="th L" id="e3" style="left:345px;top:559px"><i style="left:0px;top:0px;width:109px;height:68px;background:linear-gradient(#1a7ce6,#2a86e4)"></i><i style="left:2px;top:1px;width:1px;height:1px;background:#8ac0f8"></i><i style="left:45px;top:1px;width:1px;height:1px;background:#8ac0f8"></i><i style="left:104px;top:1px;width:3px;height:1px;background:#8ac0f8"></i><i style="left:14px;top:5.4px;width:26px;height:12px;background:#16202c;border-radius:2px"></i><i style="left:16px;top:7.4px;width:22px;height:10px;background:linear-gradient(#2a3a4c,#5a7088)"></i><i style="left:20px;top:9.6px;width:14px;height:2.4px;background:#8a9aae"></i><i style="left:41.6px;top:5px;width:5px;height:5.6px;background:#c8b8a0;border-radius:1px"></i><i style="left:42.6px;top:6px;width:3px;height:3.6px;background:#e84a3a"></i></div>
  <div class="th L" id="e4" style="left:503px;top:559px"><i style="left:0px;top:0px;width:109px;height:68px;background:linear-gradient(#1a7ce6,#2a86e4)"></i><i style="left:2px;top:1px;width:1px;height:1px;background:#8ac0f8"></i><i style="left:50px;top:1px;width:1px;height:1px;background:#8ac0f8"></i><i style="left:104px;top:1px;width:3px;height:1px;background:#8ac0f8"></i><i style="left:12px;top:4.6px;width:41px;height:13px;background:#141a24;border-radius:2px"></i><i style="left:15px;top:6.4px;width:35px;height:11px;background:linear-gradient(100deg,#c84a3a,#e8684a 40%,#d85a3a 70%,#b84a3a)"></i><i style="left:22px;top:8.4px;width:8px;height:8px;background:#7a2a22;border-radius:4px 4px 0 0"></i><i style="left:33px;top:9.4px;width:7px;height:7px;background:#f0b09a;border-radius:4px 4px 0 0"></i><i style="left:57px;top:6px;width:40px;height:12px;background:#fafafa;border-radius:1px"></i><i style="left:60px;top:9.2px;width:4px;height:0.9px;background:#8a8a8a"></i><i style="left:60px;top:11.8px;width:3px;height:0.9px;background:#aaa"></i></div>
  <div class="th L" id="e5" style="left:662px;top:559px"><i style="left:0px;top:0px;width:109px;height:68px;background:linear-gradient(#1a7ce6,#2a86e4)"></i><i style="left:2px;top:1px;width:1px;height:1px;background:#8ac0f8"></i><i style="left:50px;top:1px;width:1px;height:1px;background:#8ac0f8"></i><i style="left:104px;top:1px;width:3px;height:1px;background:#8ac0f8"></i><i style="left:13px;top:4.4px;width:85px;height:14px;background:#2c3a4c;border-radius:2px"></i><i style="left:14.6px;top:6px;width:40px;height:12px;background:linear-gradient(#4470a8,#5a82b4)"></i><i style="left:57px;top:6px;width:39px;height:12px;background:linear-gradient(110deg,#8a2a1a,#e8561a 35%,#f07a2a 60%,#c84a1a 85%,#3a2a3a)"></i><i style="left:16px;top:6.4px;font:14.6px/1 'Liberation Sans',sans-serif;color:#f4f8fc;letter-spacing:-.3px;font-style:normal;will-change:transform">12:50</i></div>

  <div id="scroll" class="abs"><div class="abs" style="left:0;top:0;width:11px;height:14px;background:linear-gradient(#585858,#666);border-bottom:1px solid #8a8a8a"></div><svg style="left:2.2px;top:5px" width="6.6" height="5" viewBox="0 0 6.6 5"><path d="M3.3.3L6.4 4.4H.2Z" fill="#111"/></svg><div id="sthumb" class="abs"></div><svg style="left:2.4px;top:514.5px" width="6.4" height="4.6" viewBox="0 0 6.4 4.6"><path d="M.2.3H6.2L3.2 4.4Z" fill="#151515"/></svg></div>
  <div class="abs" style="left:708px;top:10px;width:56px;height:24px;background:radial-gradient(ellipse at 50% 60%,rgba(90,150,215,.30) 0,rgba(80,140,205,.14) 50%,rgba(70,130,200,0) 75%)"></div>
  <div class="abs" style="left:716px;top:13.5px;width:40px;height:14px;background:rgba(84,150,220,.50);clip-path:polygon(50% 0,100% 78%,88% 100%,12% 100%,0 78%);filter:blur(1.3px)"></div>
  <div class="abs" style="left:680px;top:29.6px;width:78px;height:4.4px;background:repeating-linear-gradient(90deg,rgba(40,100,190,.50) 0 4px,rgba(40,100,190,.28) 4px 5.4px);filter:blur(.7px)"></div>
</div>
<div id="status" class="abs"><svg style="left:948px;top:9px" width="9" height="9" viewBox="0 0 9 9"><path d="M8.5.5V8.5H.5Z" fill="#bfb9ae"/><path d="M8.5 3L3 8.5M8.5 6L6 8.5" stroke="#a19b90" stroke-width=".8"/></svg><span class="t" id="st" style="left:18px;top:5px;font-size:8.3px;color:#2a2a2a">20 fotografií, 7,56 MB</span></div>
</body>
</html>
